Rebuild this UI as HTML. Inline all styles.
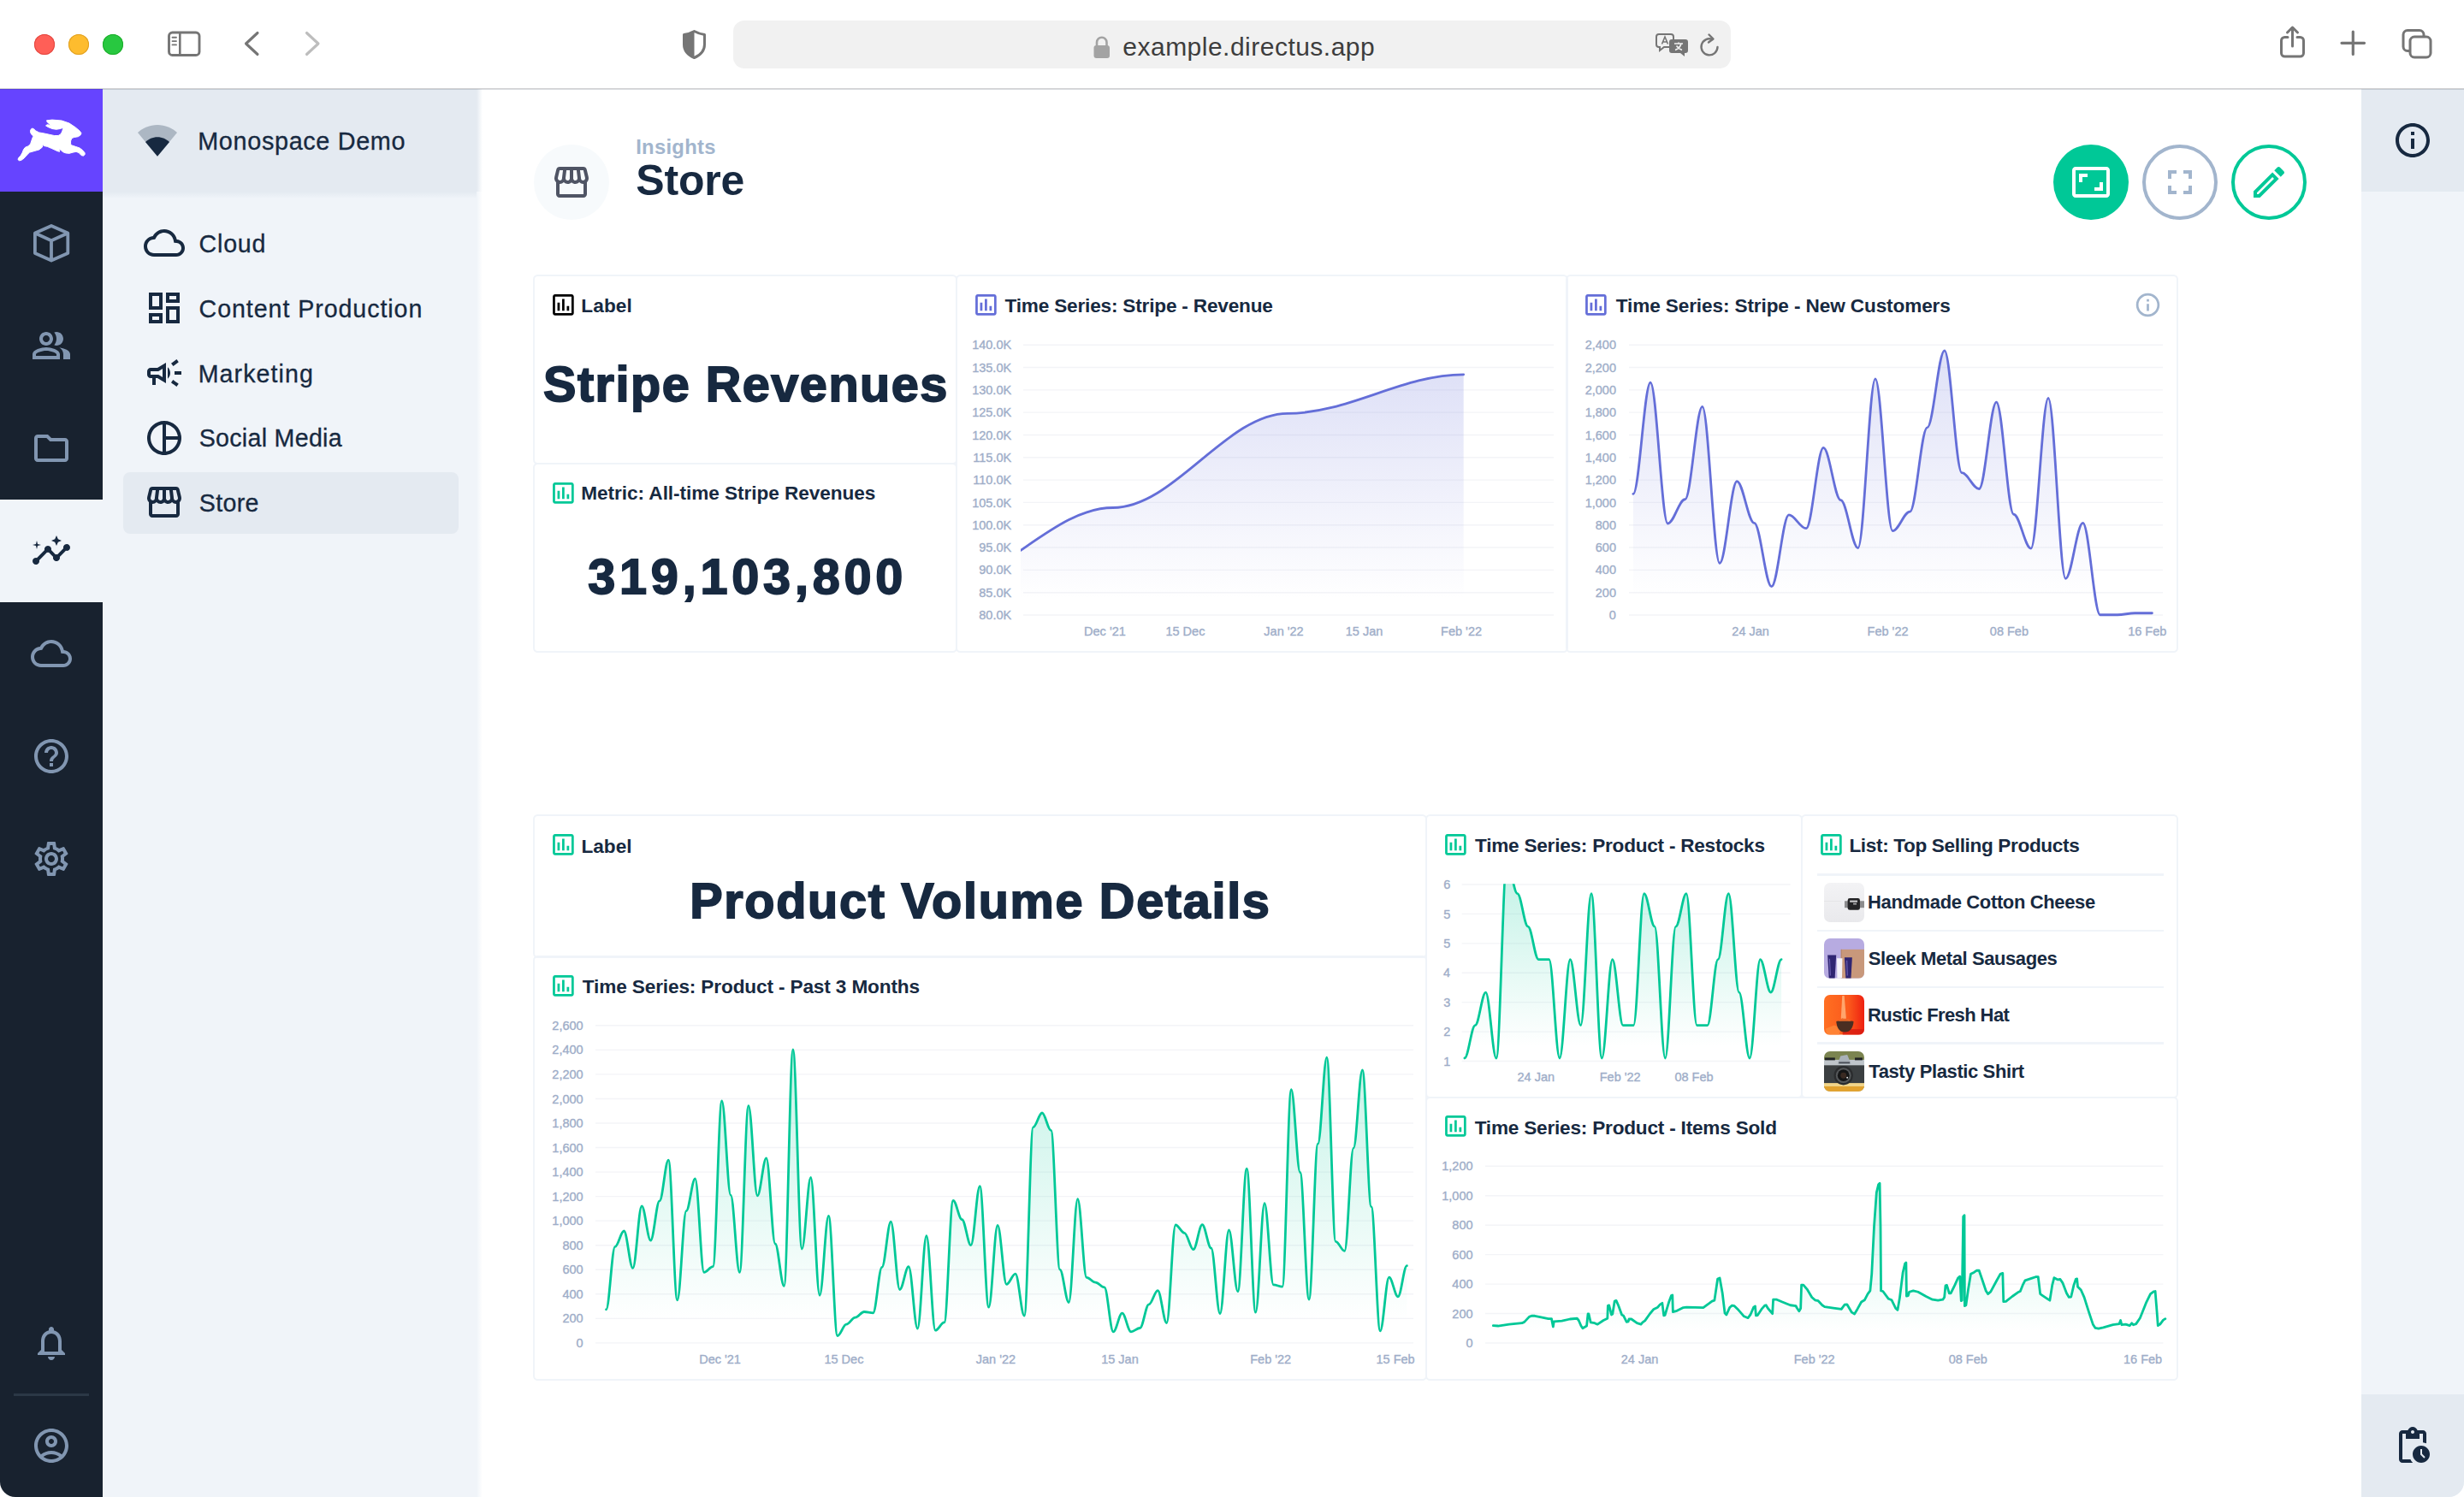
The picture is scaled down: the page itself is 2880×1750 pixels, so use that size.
<!DOCTYPE html>
<html lang="en"><head><meta charset="utf-8"><title>Store - Insights</title>
<style>
html,body{margin:0;padding:0;background:#fff;}
body{width:2880px;height:1750px;overflow:hidden;position:relative;font-family:"Liberation Sans",sans-serif;}
#w{position:absolute;left:0;top:0;width:2880px;height:1750px;overflow:hidden;border-radius:0 0 18px 18px;}
.t{position:absolute;white-space:nowrap;line-height:1;}
.i,.b{position:absolute;display:block;}
</style></head><body><div id="w">
<div class="b" style="left:0.00px;top:0.00px;width:2880.00px;height:104.00px;background:#fff;"></div>
<div class="b" style="left:40.00px;top:39.50px;width:24.00px;height:24.00px;background:#FF5F57;border-radius:50%;box-shadow:inset 0 0 0 1px #E2463F;"></div>
<div class="b" style="left:80.00px;top:39.50px;width:24.00px;height:24.00px;background:#FEBC2E;border-radius:50%;box-shadow:inset 0 0 0 1px #DFA023;"></div>
<div class="b" style="left:120.00px;top:39.50px;width:24.00px;height:24.00px;background:#28C840;border-radius:50%;box-shadow:inset 0 0 0 1px #1DAD2B;"></div>
<svg class="i" style="left:190px;top:30px" width="50" height="42" viewBox="0 0 50 42"><rect x="7.500" y="8" width="35.500" height="26.500" rx="4" fill="none" stroke="#757575" stroke-width="2.900"/><path d="M20.300 8v26.500" stroke="#757575" stroke-width="2.600" fill="none"/><path d="M11.500 13.700h4.500M11.500 18.100h4.500M11.500 22.400h4.500" stroke="#757575" stroke-width="1.900" stroke-linecap="round" fill="none"/></svg>
<svg class="i" style="left:280px;top:30px" width="30" height="42" viewBox="0 0 30 42"><path d="M21 8.500L7.500 21 21 33.500" fill="none" stroke="#757575" stroke-width="3.100" stroke-linecap="round" stroke-linejoin="round"/></svg>
<svg class="i" style="left:350px;top:30px" width="30" height="42" viewBox="0 0 30 42"><path d="M8.500 8.500L22 21 8.500 33.500" fill="none" stroke="#BDBDBD" stroke-width="3.100" stroke-linecap="round" stroke-linejoin="round"/></svg>
<svg class="i" style="left:796px;top:33px" width="32" height="38" viewBox="0 0 32 38"><path d="M15.500 3.500C11 6 7 7 3.500 7.500V19c0 7.500 5 12.500 12 15.500 7-3 12-8 12-15.500V7.500C24 7 20 6 15.500 3.500z" fill="none" stroke="#757575" stroke-width="3" stroke-linejoin="round"/><path d="M15.500 3.500C11 6 7 7 3.500 7.500V19c0 7.500 5 12.500 12 15.500z" fill="#757575"/></svg>
<div class="b" style="left:857.00px;top:24.00px;width:1166.00px;height:56.00px;background:#F1F1F1;border-radius:13px;"></div>
<svg class="i" style="left:1277px;top:40px" width="22" height="30" viewBox="0 0 22 30"><rect x="1.500" y="13" width="18.500" height="15" rx="3" fill="#A3A3A3"/><path d="M5 14V9.500a5.750 5.750 0 0 1 11.500 0V14" fill="none" stroke="#A3A3A3" stroke-width="2.600"/></svg>
<div class="t" style="left:1312.30px;top:39.80px;font-size:30.00px;color:#3D3D3D;letter-spacing:0.487px;">example.directus.app</div>
<svg class="i" style="left:1934px;top:37px" width="42" height="32" viewBox="0 0 42 32"><path d="M5 3h14a3 3 0 0 1 3 3v9a3 3 0 0 1-3 3h-8l-5 4v-4H5a3 3 0 0 1-3-3V6a3 3 0 0 1 3-3z" fill="none" stroke="#757575" stroke-width="2"/><path d="M8.500 14.500L12 6l3.500 8.500M9.800 12h4.400" fill="none" stroke="#757575" stroke-width="1.600"/><path d="M20 9h16a3 3 0 0 1 3 3v10a3 3 0 0 1-3 3h-1v4l-5-4H20a3 3 0 0 1-3-3V12a3 3 0 0 1 3-3z" fill="#757575"/><path d="M23 14h10M28 12.500v1.500M31 14c-1 4-4 6.500-7 7.500M25.500 16.500c1.500 2.500 4 4 6.500 5" fill="none" stroke="#F1F1F1" stroke-width="1.600"/></svg>
<svg class="i" style="left:1984px;top:37px" width="28" height="32" viewBox="0 0 28 32"><path d="M23.500 18a9.500 9.500 0 1 1-6-9" fill="none" stroke="#757575" stroke-width="2.400" stroke-linecap="round"/><path d="M13.500 3.500l5 5-5.500 4" fill="none" stroke="#757575" stroke-width="2.400" stroke-linecap="round" stroke-linejoin="round"/></svg>
<svg class="i" style="left:2660px;top:26px" width="40" height="48" viewBox="0 0 40 48"><path d="M14 17.500H10.500a4 4 0 0 0-4 4V36a4 4 0 0 0 4 4h18a4 4 0 0 0 4-4V21.500a4 4 0 0 0-4-4H25" fill="none" stroke="#757575" stroke-width="3" stroke-linecap="round"/><path d="M19.500 28V6.500M13.500 12l6-6 6 6" fill="none" stroke="#757575" stroke-width="3" stroke-linecap="round" stroke-linejoin="round"/></svg>
<svg class="i" style="left:2730px;top:30px" width="40" height="40" viewBox="0 0 40 40"><path d="M20.300 7v26.500M7 20.300h26.500" stroke="#757575" stroke-width="3.200" stroke-linecap="round"/></svg>
<svg class="i" style="left:2800px;top:28px" width="48" height="46" viewBox="0 0 48 46"><rect x="9" y="7.500" width="24" height="24" rx="5" fill="#fff" stroke="#757575" stroke-width="3"/><rect x="17" y="15" width="24" height="24" rx="5" fill="#fff" stroke="#757575" stroke-width="3"/></svg>
<div class="b" style="left:0.00px;top:104.00px;width:120.00px;height:1646.00px;background:#18222F;"></div>
<div class="b" style="left:0.00px;top:104.00px;width:120.00px;height:120.00px;background:#6644FF;"></div>
<svg class="i" style="left:0;top:104px" width="120" height="120" viewBox="0 0 120 120"><polygon points="54.51,36.87 60.92,36.07 72.14,37.03 80.96,40.08 88.18,44.89 92.99,48.90 94.99,51.70 94.19,53.71 91.38,55.71 86.57,56.51 83.77,57.72 82.57,60.92 82.57,64.13 83.37,65.73 88.18,67.33 92.99,68.94 96.19,71.34 99.00,74.55 99.24,76.55 97.39,78.16 94.99,77.60 92.18,74.55 88.98,73.35 84.97,74.15 80.96,75.35 76.95,74.95 73.75,73.75 71.34,71.74 68.94,69.74 69.58,73.35 66.93,72.55 60.92,69.74 55.31,67.33 51.30,66.53 50.50,64.13 49.30,68.14 45.69,70.94 40.08,72.55 34.47,74.15 31.66,76.95 28.06,80.96 24.85,83.37 22.44,83.77 21.00,82.57 21.64,80.56 24.05,78.16 26.05,74.55 27.66,70.54 29.66,68.14 32.87,66.93 35.67,64.13 37.27,59.32 38.48,56.11 39.28,54.91 37.27,53.71 35.67,50.90 35.67,48.10 37.27,46.09 39.28,46.49 41.68,48.90 45.69,50.90 52.10,52.10 57.72,53.31 63.33,54.51 68.14,54.51 70.94,52.91 72.55,50.10 73.59,46.89 73.75,45.29 70.54,46.49 65.73,47.29 60.92,46.49 56.11,44.49 53.55,42.89 55.31,41.68 59.72,42.48 57.72,40.88 55.31,38.88" fill="#fff" stroke="#fff" stroke-width="1" stroke-linejoin="round"/></svg>
<div class="b" style="left:0.00px;top:584.00px;width:120.00px;height:120.00px;background:#F0F4F9;"></div>
<svg class="i" style="left:36px;top:260px" width="48" height="48" viewBox="0 0 48 48"><path d="M24 4L43.300 12.500V36L24 44.500 4.900 36V12.500zM4.900 12.500L24 21.200 43.300 12.500M24 21.200V44.500" fill="none" stroke="#8196B1" stroke-width="3.800" stroke-linejoin="round"/></svg>
<svg class="i" style="left:36.00px;top:380.00px;" width="48.00" height="48.00" viewBox="0 0 24 24"><path fill="#8196B1" d="M16.67 13.13C18.04 14.06 19 15.32 19 17v3h4v-3c0-2.18-3.57-3.47-6.33-3.87zM15 12c2.21 0 4-1.79 4-4s-1.79-4-4-4c-.47 0-.91.1-1.33.24C14.5 5.27 15 6.58 15 8s-.5 2.73-1.33 3.76c.42.14.86.24 1.33.24zM9 12c2.21 0 4-1.79 4-4s-1.79-4-4-4-4 1.79-4 4 1.79 4 4 4zm0-6c1.1 0 2 .9 2 2s-.9 2-2 2-2-.9-2-2 .9-2 2-2zm0 7c-2.67 0-8 1.34-8 4v3h16v-3c0-2.66-5.33-4-8-4zm6 5H3v-.99C3.2 16.29 6.3 15 9 15s5.8 1.29 6 2v1z"/></svg>
<svg class="i" style="left:36.00px;top:500.00px;" width="48.00" height="48.00" viewBox="0 0 24 24"><path fill="#8196B1" d="M9.17 6l2 2H20v10H4V6h5.17M10 4H4c-1.1 0-1.99.9-1.99 2L2 18c0 1.1.9 2 2 2h16c1.1 0 2-.9 2-2V8c0-1.1-.9-2-2-2h-8l-2-2z"/></svg>
<svg class="i" style="left:36.00px;top:620.00px;" width="48.00" height="48.00" viewBox="0 0 24 24"><path fill="#172940" d="M21 8c-1.45 0-2.26 1.44-1.93 2.51l-3.55 3.56c-.3-.09-.74-.09-1.04 0l-2.55-2.55C12.27 10.45 11.46 9 10 9c-1.45 0-2.27 1.44-1.930 2.520l-4.560 4.550C2.440 15.740 1 16.550 1 18c0 1.100.9 2 2 2 1.450 0 2.260-1.440 1.930-2.510l4.550-4.560c.3.09.74.09 1.040 0l2.550 2.550C12.730 16.550 13.540 18 15 18c1.450 0 2.270-1.440 1.930-2.520l3.560-3.550c1.070.33 2.510-.48 2.510-1.930 0-1.100-.9-2-2-2zM15 9l.94-2.070L18 6l-2.060-.93L15 3l-.92 2.070L12 6l2.080.93zM3.500 11L4 9l2-.5L4 8l-.5-2L3 8l-2 .5L3 9z"/></svg>
<svg class="i" style="left:36.00px;top:740.00px;" width="48.00" height="48.00" viewBox="0 0 24 24"><path fill="#8196B1" d="M19.35 10.04C18.67 6.59 15.64 4 12 4 9.11 4 6.6 5.64 5.35 8.04 2.34 8.36 0 10.91 0 14c0 3.31 2.69 6 6 6h13c2.76 0 5-2.24 5-5 0-2.64-2.05-4.78-4.65-4.96zM19 18H6c-2.21 0-4-1.79-4-4 0-2.05 1.53-3.76 3.56-3.97l1.07-.11.5-.95C8.08 7.14 9.94 6 12 6c2.62 0 4.88 1.86 5.39 4.43l.3 1.5 1.53.11c1.56.1 2.78 1.41 2.78 2.96 0 1.65-1.35 3-3 3z"/></svg>
<svg class="i" style="left:36.00px;top:860.00px;" width="48.00" height="48.00" viewBox="0 0 24 24"><path fill="#8196B1" d="M11 18h2v-2h-2v2zm1-16C6.48 2 2 6.48 2 12s4.48 10 10 10 10-4.48 10-10S17.52 2 12 2zm0 18c-4.41 0-8-3.59-8-8s3.59-8 8-8 8 3.59 8 8-3.59 8-8 8zm0-14c-2.21 0-4 1.79-4 4h2c0-1.1.9-2 2-2s2 .9 2 2c0 2-3 1.75-3 5h2c0-2.25 3-2.5 3-5 0-2.21-1.790-4-4-4z"/></svg>
<svg class="i" style="left:36.00px;top:980.00px;" width="48.00" height="48.00" viewBox="0 0 24 24"><path fill="#8196B1" d="M19.43 12.98c.04-.32.07-.64.07-.98 0-.34-.03-.66-.07-.98l2.110-1.650c.19-.15.24-.42.12-.64l-2-3.460c-.09-.16-.26-.25-.44-.25-.06 0-.12.01-.17.03l-2.490 1c-.52-.4-1.080-.73-1.690-.98l-.38-2.650C14.460 2.180 14.250 2 14 2h-4c-.25 0-.46.18-.49.42l-.38 2.650c-.61.25-1.170.59-1.690.98l-2.490-1c-.06-.02-.12-.03-.18-.03-.17 0-.34.09-.43.25l-2 3.460c-.13.22-.07.49.12.64l2.110 1.650c-.04.32-.07.65-.07.98 0 .33.03.66.07.98l-2.110 1.650c-.19.15-.24.42-.12.64l2 3.460c.09.16.26.25.44.25.06 0 .12-.01.17-.03l2.490-1c.52.4 1.080.73 1.690.98l.38 2.650c.03.24.24.42.49.42h4c.25 0 .46-.18.49-.42l.38-2.650c.61-.25 1.170-.59 1.690-.98l2.490 1c.06.02.12.03.18.03.17 0 .34-.09.43-.25l2-3.460c.12-.22.07-.49-.12-.64l-2.110-1.650zm-1.980-1.710c.04.31.05.52.05.73 0 .21-.02.43-.05.73l-.14 1.130.89.7 1.080.84-.7 1.210-1.270-.51-1.040-.42-.9.68c-.43.32-.84.56-1.250.73l-1.060.43-.16 1.130-.2 1.350h-1.400l-.19-1.350-.16-1.130-1.060-.43c-.43-.18-.83-.41-1.230-.71l-.91-.7-1.060.43-1.270.51-.7-1.210 1.080-.84.89-.7-.14-1.130c-.03-.31-.05-.54-.05-.74s.02-.43.05-.73l.14-1.130-.89-.7-1.080-.84.7-1.210 1.270.51 1.040.42.9-.68c.43-.32.84-.56 1.250-.73l1.060-.43.16-1.130.2-1.350h1.390l.19 1.350.16 1.130 1.060.43c.43.18.83.41 1.230.71l.91.7 1.060-.43 1.270-.51.7 1.210-1.070.85-.89.7.14 1.130zM12 8c-2.210 0-4 1.790-4 4s1.790 4 4 4 4-1.790 4-4-1.790-4-4-4zm0 6c-1.100 0-2-.9-2-2s.9-2 2-2 2 .9 2 2-.9 2-2 2z"/></svg>
<svg class="i" style="left:36.00px;top:1546.00px;" width="48.00" height="48.00" viewBox="0 0 24 24"><path fill="#8196B1" d="M12 22c1.1 0 2-.9 2-2h-4c0 1.1.9 2 2 2zm6-6v-5c0-3.070-1.630-5.640-4.500-6.320V4c0-.83-.67-1.500-1.500-1.500s-1.500.67-1.500 1.500v.68C7.640 5.360 6 7.920 6 11v5l-2 2v1h16v-1l-2-2zm-2 1H8v-6c0-2.480 1.510-4.500 4-4.500s4 2.020 4 4.500v6z"/></svg>
<div class="b" style="left:16.00px;top:1629.00px;width:88.00px;height:2.50px;background:#2B3846;"></div>
<svg class="i" style="left:36.00px;top:1666.00px;" width="48.00" height="48.00" viewBox="0 0 24 24"><path fill="#8196B1" d="M12 2C6.48 2 2 6.48 2 12s4.48 10 10 10 10-4.48 10-10S17.52 2 12 2zM7.350 18.500C8.660 17.560 10.260 17 12 17s3.340.56 4.650 1.500c-1.310.94-2.910 1.500-4.650 1.500s-3.340-.56-4.650-1.500zm10.790-1.380C16.450 15.800 14.320 15 12 15s-4.450.8-6.140 2.120C4.700 15.730 4 13.950 4 12c0-4.420 3.580-8 8-8s8 3.580 8 8c0 1.950-.7 3.730-1.860 5.120zM12 6c-1.930 0-3.500 1.570-3.500 3.500S10.070 13 12 13s3.500-1.570 3.500-3.500S13.930 6 12 6zm0 5c-.83 0-1.500-.67-1.500-1.500S11.170 8 12 8s1.500.67 1.500 1.500S12.830 11 12 11z"/></svg>
<div class="b" style="left:120.00px;top:104.00px;width:440.00px;height:1646.00px;background:#F0F4F9;"></div>
<div class="b" style="left:120.00px;top:224.00px;width:440.00px;height:8.00px;background:linear-gradient(#E4EAF1,#F0F4F9);"></div>
<div class="b" style="left:120.00px;top:104.00px;width:440.00px;height:120.00px;background:#E4EAF1;"></div>
<svg class="i" style="left:156px;top:140px" width="56" height="48" viewBox="0 0 56 48"><path d="M28 42.800L5 15C11 9.500 19 6 28 6s17 3.500 23 9z" fill="#ACB7C3"/><path d="M28 42.800L14 26c3.500-3.500 8.500-5.800 14-5.800S38.500 22.500 42 26z" fill="#172940"/></svg>
<div class="t" style="left:231.20px;top:150.90px;font-size:28.80px;color:#172940;letter-spacing:0.665px;-webkit-text-stroke:.300px #172940;">Monospace Demo</div>
<div class="b" style="left:144.00px;top:552.00px;width:392.00px;height:72.00px;background:#E4EAF1;border-radius:8px;"></div>
<svg class="i" style="left:168.00px;top:259.80px;" width="48.00" height="48.00" viewBox="0 0 24 24"><path fill="#172940" d="M19.35 10.04C18.67 6.59 15.64 4 12 4 9.11 4 6.6 5.64 5.35 8.04 2.34 8.36 0 10.91 0 14c0 3.31 2.69 6 6 6h13c2.76 0 5-2.24 5-5 0-2.64-2.05-4.78-4.65-4.96zM19 18H6c-2.21 0-4-1.79-4-4 0-2.05 1.53-3.76 3.56-3.97l1.07-.11.5-.95C8.08 7.14 9.94 6 12 6c2.62 0 4.88 1.86 5.39 4.43l.3 1.5 1.53.11c1.56.1 2.78 1.41 2.78 2.96 0 1.65-1.35 3-3 3z"/></svg>
<div class="t" style="left:232.57px;top:271.00px;font-size:28.60px;color:#172940;letter-spacing:0.786px;-webkit-text-stroke:.300px #172940;">Cloud</div>
<svg class="i" style="left:168.00px;top:336.20px;" width="48.00" height="48.00" viewBox="0 0 24 24"><path fill="#172940" d="M19 5v2h-4V5h4M9 5v6H5V5h4m10 8v6h-4v-6h4M9 17v2H5v-2h4M21 3h-8v6h8V3zM11 3H3v10h8V3zm10 8h-8v10h8V11zm-10 4H3v6h8v-6z"/></svg>
<div class="t" style="left:232.57px;top:347.00px;font-size:28.60px;color:#172940;letter-spacing:0.940px;-webkit-text-stroke:.300px #172940;">Content Production</div>
<svg class="i" style="left:168.00px;top:412.20px;" width="48.00" height="48.00" viewBox="0 0 24 24"><path fill="#172940" d="M18 11v2h4v-2h-4zm-2 6.61c.96.71 2.21 1.65 3.2 2.39.4-.53.8-1.07 1.2-1.6-.99-.74-2.24-1.68-3.2-2.4-.4.54-.8 1.08-1.2 1.61zM20.4 5.6c-.4-.53-.8-1.07-1.2-1.6-.99.74-2.24 1.68-3.2 2.4.4.53.8 1.07 1.2 1.6.96-.72 2.21-1.65 3.2-2.4zM4 9c-1.1 0-2 .9-2 2v2c0 1.1.9 2 2 2h1v4h2v-4h1l5 3V6L8 9H4zm5.03 1.71L11 9.53v4.94l-1.97-1.18-.48-.29H4v-2h4.55l.48-.29zM15.5 12c0-1.33-.58-2.53-1.5-3.35v6.69c.92-.81 1.5-2.01 1.5-3.34z"/></svg>
<div class="t" style="left:231.71px;top:423.00px;font-size:28.60px;color:#172940;letter-spacing:1.074px;-webkit-text-stroke:.300px #172940;">Marketing</div>
<svg class="i" style="left:168.00px;top:487.70px;" width="48.00" height="48.00" viewBox="0 0 24 24"><path fill="#172940" d="M12 2C6.48 2 2 6.48 2 12s4.48 10 10 10 10-4.48 10-10S17.52 2 12 2zm1 2.07c3.61.45 6.48 3.33 6.93 6.93H13V4.07zM4 12c0-4.06 3.07-7.44 7-7.93v15.87c-3.93-.5-7-3.88-7-7.94zm9 7.93V13h6.93c-.45 3.61-3.32 6.48-6.93 6.93z"/></svg>
<div class="t" style="left:232.71px;top:498.00px;font-size:28.60px;color:#172940;letter-spacing:0.296px;-webkit-text-stroke:.300px #172940;">Social Media</div>
<svg class="i" style="left:168.00px;top:563.20px;" width="48.00" height="48.00" viewBox="0 0 24 24"><path fill="#172940" d="M21.9 8.89l-1.05-4.37c-.22-.9-1-1.52-1.91-1.52H5.05c-.9 0-1.69.63-1.9 1.52L2.1 8.89c-.24 1.02-.02 2.06.62 2.88.08.11.19.19.28.29V19c0 1.1.9 2 2 2h14c1.1 0 2-.9 2-2v-6.940c.09-.09.2-.18.28-.28.64-.82.87-1.87.62-2.890zm-2.990-3.9l1.05 4.37c.1.42.01.84-.25 1.17-.14.18-.44.47-.94.47-.61 0-1.14-.49-1.21-1.14L16.980 5l1.930-.010zM13 5h1.960l.54 4.520c.05.39-.07.78-.33 1.070-.22.26-.54.41-.95.41-.67 0-1.220-.59-1.220-1.310V5zM8.490 9.520L9.040 5H11v4.690c0 .72-.55 1.310-1.290 1.310-.34 0-.65-.15-.89-.41-.25-.29-.37-.68-.33-1.070zm-4.450-.16L5.050 5h1.970l-.58 4.860c-.08.65-.6 1.140-1.210 1.140-.49 0-.8-.29-.93-.47-.27-.32-.36-.75-.26-1.170zM5 19v-6.030c.08.01.15.03.23.03.87 0 1.660-.36 2.240-.95.6.6 1.400.95 2.310.95.87 0 1.650-.36 2.230-.93.59.57 1.390.93 2.290.93.84 0 1.640-.35 2.240-.95.58.59 1.370.95 2.240.95.08 0 .15-.02.23-.03V19H5z"/></svg>
<div class="t" style="left:232.71px;top:574.00px;font-size:28.60px;color:#172940;letter-spacing:0.355px;-webkit-text-stroke:.300px #172940;">Store</div>
<div class="b" style="left:560.00px;top:104.00px;width:2200.00px;height:1646.00px;background:#fff;"></div>
<div class="b" style="left:556.50px;top:104.00px;width:7.00px;height:1646.00px;background:linear-gradient(90deg,#F0F4F9,#fff);"></div>
<div class="b" style="left:556.50px;top:104.00px;width:7.00px;height:120.00px;background:linear-gradient(90deg,#E4EAF1,#fff);"></div>
<div class="b" style="left:2760.00px;top:104.00px;width:120.00px;height:1646.00px;background:#F0F4F9;"></div>
<div class="b" style="left:2760.00px;top:104.00px;width:120.00px;height:120.00px;background:#E4EAF1;"></div>
<div class="b" style="left:2760.00px;top:1630.00px;width:120.00px;height:120.00px;background:#E4EAF1;"></div>
<svg class="i" style="left:2796.00px;top:140.00px;" width="48.00" height="48.00" viewBox="0 0 24 24"><path fill="#172940" d="M11 7h2v2h-2zm0 4h2v6h-2zm1-9C6.48 2 2 6.48 2 12s4.48 10 10 10 10-4.48 10-10S17.52 2 12 2zm0 18c-4.410 0-8-3.590-8-8s3.590-8 8-8 8 3.590 8 8-3.590 8-8 8z"/></svg>
<svg class="i" style="left:2796.00px;top:1666.00px;" width="48.00" height="48.00" viewBox="0 0 24 24"><path fill="#172940" d="M17 12c-2.760 0-5 2.240-5 5s2.240 5 5 5 5-2.240 5-5-2.240-5-5-5zm1.650 7.350L16.500 17.200V14h1v2.790l1.850 1.850-.7.710zM18 3h-3.180C14.400 1.840 13.300 1 12 1s-2.400.84-2.820 2H6c-1.100 0-2 .9-2 2v15c0 1.100.9 2 2 2h6.110c-.59-.57-1.070-1.250-1.420-2H6V5h2v3h8V5h2v5.080c.71.1 1.380.31 2 .6V5c0-1.100-.9-2-2-2zm-6 2c-.55 0-1-.45-1-1s.45-1 1-1 1 .45 1 1-.45 1-1 1z"/></svg>
<div class="b" style="left:0.00px;top:103.00px;width:2880.00px;height:1.20px;background:#D2D2D4;"></div>
<div class="b" style="left:0.00px;top:104.00px;width:2880.00px;height:1.40px;background:rgba(20,30,50,.16);"></div>
<div class="b" style="left:624.00px;top:169.00px;width:88.00px;height:88.00px;background:#F7FAFC;border-radius:50%;"></div>
<svg class="i" style="left:644.00px;top:189.00px;" width="48.00" height="48.00" viewBox="0 0 24 24"><path fill="#4F5464" d="M21.9 8.89l-1.05-4.37c-.22-.9-1-1.52-1.91-1.52H5.05c-.9 0-1.69.63-1.9 1.52L2.1 8.89c-.24 1.02-.02 2.06.62 2.88.08.11.19.19.28.29V19c0 1.1.9 2 2 2h14c1.1 0 2-.9 2-2v-6.940c.09-.09.2-.18.28-.28.64-.82.87-1.87.62-2.890zm-2.990-3.9l1.05 4.37c.1.42.01.84-.25 1.17-.14.18-.44.47-.94.47-.61 0-1.14-.49-1.21-1.14L16.980 5l1.930-.010zM13 5h1.960l.54 4.520c.05.39-.07.78-.33 1.070-.22.26-.54.41-.95.41-.67 0-1.220-.59-1.220-1.310V5zM8.490 9.520L9.040 5H11v4.690c0 .72-.55 1.310-1.290 1.310-.34 0-.65-.15-.89-.41-.25-.29-.37-.68-.33-1.070zm-4.450-.16L5.050 5h1.970l-.58 4.860c-.08.65-.6 1.140-1.210 1.140-.49 0-.8-.29-.93-.47-.27-.32-.36-.75-.26-1.170zM5 19v-6.030c.08.01.15.03.23.03.87 0 1.660-.36 2.240-.95.6.6 1.400.95 2.310.95.87 0 1.650-.36 2.230-.93.59.57 1.390.93 2.290.93.84 0 1.640-.35 2.240-.95.58.59 1.370.95 2.240.95.08 0 .15-.02.23-.03V19H5z"/></svg>
<div class="t" style="left:743.15px;top:159.90px;font-size:23.80px;color:#A2B5CD;font-weight:700;letter-spacing:0.306px;">Insights</div>
<div class="t" style="left:743.20px;top:186.30px;font-size:50.00px;color:#172940;font-weight:700;letter-spacing:-0.150px;">Store</div>
<div class="b" style="left:2400.00px;top:169.00px;width:88.00px;height:88.00px;background:#00C897;border-radius:50%;"></div>
<svg class="i" style="left:2420.00px;top:189.00px;" width="48.00" height="48.00" viewBox="0 0 24 24"><path fill="#fff" d="M19 12h-2v3h-3v2h5v-5zM7 9h3V7H5v5h2V9zm14-6H3c-1.100 0-2 .9-2 2v14c0 1.100.9 2 2 2h18c1.100 0 2-.9 2-2V5c0-1.100-.9-2-2-2zm0 16.010H3V4.990h18v14.020z"/></svg>
<div class="b" style="left:2504.00px;top:169.00px;width:88.00px;height:88.00px;border:4px solid #A2B5CD;border-radius:50%;box-sizing:border-box;"></div>
<svg class="i" style="left:2524.00px;top:189.00px;" width="48.00" height="48.00" viewBox="0 0 24 24"><path fill="#A2B5CD" d="M7 14H5v5h5v-2H7v-3zm-2-4h2V7h3V5H5v5zm12 7h-3v2h5v-5h-2v3zM14 5v2h3v3h2V5h-5z"/></svg>
<div class="b" style="left:2608.00px;top:169.00px;width:88.00px;height:88.00px;border:4px solid #00C897;border-radius:50%;box-sizing:border-box;"></div>
<svg class="i" style="left:2628.00px;top:189.00px;" width="48.00" height="48.00" viewBox="0 0 24 24"><path fill="#00C897" d="M3 17.250V21h3.750L17.810 9.940l-3.750-3.750L3 17.250zM5.920 19H5v-.92l9.060-9.060.92.92L5.920 19zM20.710 5.630l-2.340-2.340c-.2-.2-.45-.29-.71-.29s-.51.1-.7.29l-1.830 1.830 3.750 3.750 1.830-1.830c.39-.39.39-1.020 0-1.410z"/></svg>
<div class="b" style="left:622.80px;top:321.10px;width:496.66px;height:222.26px;border:2.74px solid #F0F4F9;border-radius:5.500px;box-sizing:border-box;"></div>
<svg class="i" style="left:642.07px;top:340.07px;" width="32.80" height="32.80" viewBox="0 0 24 24"><path fill="#000" d="M9 17H7v-7h2v7zm4 0h-2V7h2v10zm4 0h-2v-4h2v4zm2 2H5V5h14v14zm0-16H5c-1.100 0-2 .9-2 2v14c0 1.100.9 2 2 2h14c1.100 0 2-.9 2-2V5c0-1.100-.9-2-2-2z"/></svg>
<div class="t" style="left:679.33px;top:346.50px;font-size:22.60px;color:#172940;font-weight:700;letter-spacing:0.113px;">Label</div>
<div class="b" style="left:622.80px;top:540.62px;width:496.66px;height:222.26px;border:2.74px solid #F0F4F9;border-radius:5.500px;box-sizing:border-box;"></div>
<svg class="i" style="left:642.07px;top:559.59px;" width="32.80" height="32.80" viewBox="0 0 24 24"><path fill="#00C897" d="M9 17H7v-7h2v7zm4 0h-2V7h2v10zm4 0h-2v-4h2v4zm2 2H5V5h14v14zm0-16H5c-1.100 0-2 .9-2 2v14c0 1.100.9 2 2 2h14c1.100 0 2-.9 2-2V5c0-1.100-.9-2-2-2z"/></svg>
<div class="t" style="left:679.33px;top:565.50px;font-size:22.60px;color:#172940;font-weight:700;letter-spacing:-0.058px;">Metric: All-time Stripe Revenues</div>
<div class="b" style="left:1116.72px;top:321.10px;width:716.18px;height:441.78px;border:2.74px solid #F0F4F9;border-radius:5.500px;box-sizing:border-box;"></div>
<svg class="i" style="left:1135.99px;top:340.07px;" width="32.80" height="32.80" viewBox="0 0 24 24"><path fill="#646ED8" d="M9 17H7v-7h2v7zm4 0h-2V7h2v10zm4 0h-2v-4h2v4zm2 2H5V5h14v14zm0-16H5c-1.100 0-2 .9-2 2v14c0 1.100.9 2 2 2h14c1.100 0 2-.9 2-2V5c0-1.100-.9-2-2-2z"/></svg>
<div class="t" style="left:1174.47px;top:346.50px;font-size:22.60px;color:#172940;font-weight:700;letter-spacing:-0.183px;">Time Series: Stripe - Revenue</div>
<div class="b" style="left:1830.16px;top:321.10px;width:716.18px;height:441.78px;border:2.74px solid #F0F4F9;border-radius:5.500px;box-sizing:border-box;"></div>
<svg class="i" style="left:1849.43px;top:340.07px;" width="32.80" height="32.80" viewBox="0 0 24 24"><path fill="#646ED8" d="M9 17H7v-7h2v7zm4 0h-2V7h2v10zm4 0h-2v-4h2v4zm2 2H5V5h14v14zm0-16H5c-1.100 0-2 .9-2 2v14c0 1.100.9 2 2 2h14c1.100 0 2-.9 2-2V5c0-1.100-.9-2-2-2z"/></svg>
<div class="t" style="left:1888.77px;top:346.50px;font-size:22.60px;color:#172940;font-weight:700;letter-spacing:-0.119px;">Time Series: Stripe - New Customers</div>
<svg class="i" style="left:2493.50px;top:340.00px;" width="33.00" height="33.00" viewBox="0 0 24 24"><path fill="#A2B5CD" d="M11 7h2v2h-2zm0 4h2v6h-2zm1-9C6.48 2 2 6.48 2 12s4.48 10 10 10 10-4.48 10-10S17.52 2 12 2zm0 18c-4.410 0-8-3.590-8-8s3.590-8 8-8 8 3.590 8 8-3.590 8-8 8z"/></svg>
<div class="b" style="left:622.80px;top:952.22px;width:1045.46px;height:167.38px;border:2.74px solid #F0F4F9;border-radius:5.500px;box-sizing:border-box;"></div>
<svg class="i" style="left:642.07px;top:971.19px;" width="32.80" height="32.80" viewBox="0 0 24 24"><path fill="#00C897" d="M9 17H7v-7h2v7zm4 0h-2V7h2v10zm4 0h-2v-4h2v4zm2 2H5V5h14v14zm0-16H5c-1.100 0-2 .9-2 2v14c0 1.100.9 2 2 2h14c1.100 0 2-.9 2-2V5c0-1.100-.9-2-2-2z"/></svg>
<div class="t" style="left:679.43px;top:978.50px;font-size:22.60px;color:#172940;font-weight:700;letter-spacing:0.013px;">Label</div>
<div class="b" style="left:622.80px;top:1116.86px;width:1045.46px;height:496.66px;border:2.74px solid #F0F4F9;border-radius:5.500px;box-sizing:border-box;"></div>
<svg class="i" style="left:642.07px;top:1135.83px;" width="32.80" height="32.80" viewBox="0 0 24 24"><path fill="#00C897" d="M9 17H7v-7h2v7zm4 0h-2V7h2v10zm4 0h-2v-4h2v4zm2 2H5V5h14v14zm0-16H5c-1.100 0-2 .9-2 2v14c0 1.100.9 2 2 2h14c1.100 0 2-.9 2-2V5c0-1.100-.9-2-2-2z"/></svg>
<div class="t" style="left:680.87px;top:1142.50px;font-size:22.60px;color:#172940;font-weight:700;letter-spacing:-0.133px;">Time Series: Product - Past 3 Months</div>
<div class="b" style="left:1665.52px;top:952.22px;width:441.78px;height:332.02px;border:2.74px solid #F0F4F9;border-radius:5.500px;box-sizing:border-box;"></div>
<svg class="i" style="left:1684.79px;top:971.19px;" width="32.80" height="32.80" viewBox="0 0 24 24"><path fill="#00C897" d="M9 17H7v-7h2v7zm4 0h-2V7h2v10zm4 0h-2v-4h2v4zm2 2H5V5h14v14zm0-16H5c-1.100 0-2 .9-2 2v14c0 1.100.9 2 2 2h14c1.100 0 2-.9 2-2V5c0-1.100-.9-2-2-2z"/></svg>
<div class="t" style="left:1724.07px;top:977.50px;font-size:22.60px;color:#172940;font-weight:700;letter-spacing:-0.240px;">Time Series: Product - Restocks</div>
<div class="b" style="left:2104.56px;top:952.22px;width:441.78px;height:332.02px;border:2.74px solid #F0F4F9;border-radius:5.500px;box-sizing:border-box;"></div>
<svg class="i" style="left:2123.83px;top:971.19px;" width="32.80" height="32.80" viewBox="0 0 24 24"><path fill="#00C897" d="M9 17H7v-7h2v7zm4 0h-2V7h2v10zm4 0h-2v-4h2v4zm2 2H5V5h14v14zm0-16H5c-1.100 0-2 .9-2 2v14c0 1.100.9 2 2 2h14c1.100 0 2-.9 2-2V5c0-1.100-.9-2-2-2z"/></svg>
<div class="t" style="left:2161.43px;top:977.50px;font-size:22.60px;color:#172940;font-weight:700;letter-spacing:-0.358px;">List: Top Selling Products</div>
<div class="b" style="left:1665.52px;top:1281.50px;width:880.82px;height:332.02px;border:2.74px solid #F0F4F9;border-radius:5.500px;box-sizing:border-box;"></div>
<svg class="i" style="left:1684.79px;top:1300.47px;" width="32.80" height="32.80" viewBox="0 0 24 24"><path fill="#00C897" d="M9 17H7v-7h2v7zm4 0h-2V7h2v10zm4 0h-2v-4h2v4zm2 2H5V5h14v14zm0-16H5c-1.100 0-2 .9-2 2v14c0 1.100.9 2 2 2h14c1.100 0 2-.9 2-2V5c0-1.100-.9-2-2-2z"/></svg>
<div class="t" style="left:1723.67px;top:1307.50px;font-size:22.60px;color:#172940;font-weight:700;letter-spacing:-0.207px;">Time Series: Product - Items Sold</div>
<div class="t" style="left:634.97px;top:420.50px;font-size:57.60px;color:#172940;font-weight:700;letter-spacing:1.503px;-webkit-text-stroke:1.800px #172940;">Stripe Revenues</div>
<div class="t" style="left:687.26px;top:645.50px;font-size:57.60px;color:#172940;font-weight:700;letter-spacing:4.779px;-webkit-text-stroke:1.800px #172940;">319,103,800</div>
<div class="t" style="left:806.16px;top:1024.50px;font-size:57.60px;color:#172940;font-weight:700;letter-spacing:1.691px;-webkit-text-stroke:1.800px #172940;">Product Volume Details</div>
<div class="b" style="left:2123.70px;top:1021.30px;width:405.30px;height:2.40px;background:#F0F4F9;"></div>
<div class="t" style="left:2183.07px;top:1043.80px;font-size:22.00px;color:#172940;font-weight:700;letter-spacing:-0.366px;">Handmade Cotton Cheese</div>
<div class="b" style="left:2123.70px;top:1087.03px;width:405.30px;height:2.40px;background:#F0F4F9;"></div>
<div class="t" style="left:2183.84px;top:1109.80px;font-size:22.00px;color:#172940;font-weight:700;letter-spacing:-0.408px;">Sleek Metal Sausages</div>
<div class="b" style="left:2123.70px;top:1152.76px;width:405.30px;height:2.40px;background:#F0F4F9;"></div>
<div class="t" style="left:2183.07px;top:1175.80px;font-size:22.00px;color:#172940;font-weight:700;letter-spacing:-0.603px;">Rustic Fresh Hat</div>
<div class="b" style="left:2123.70px;top:1218.49px;width:405.30px;height:2.40px;background:#F0F4F9;"></div>
<div class="t" style="left:2184.28px;top:1241.80px;font-size:22.00px;color:#172940;font-weight:700;letter-spacing:-0.403px;">Tasty Plastic Shirt</div>
<svg class="i" style="left:2131.700px;top:1031.70px;border-radius:7px" width="47.400" height="46.500" viewBox="0 0 48 47" preserveAspectRatio="none"><defs><linearGradient id="t1" x1="0" y1="0" x2="0" y2="1"><stop offset="0" stop-color="#F3F3F5"/><stop offset="1" stop-color="#E9E9EC"/></linearGradient></defs><rect width="48" height="47" fill="url(#t1)"/><rect x="0" y="21.500" width="20" height=".8" fill="#E2E2E4"/><rect x="24.300" y="21.500" width="23.700" height="8" fill="#8C8C8E"/><rect x="28" y="18.200" width="14.500" height="14" rx="2.500" fill="#242426"/><rect x="30.500" y="20.800" width="9" height="2.200" fill="#C9C9CB"/><rect x="34.500" y="24" width="4" height="1.800" fill="#A9A9AB"/></svg>
<svg class="i" style="left:2131.700px;top:1097.47px;border-radius:7px" width="47.400" height="46.500" viewBox="0 0 48 47" preserveAspectRatio="none"><rect width="48" height="47" fill="#B7ABE1"/><rect x="20" y="13" width="28" height="34" fill="#C8987B"/><rect x="20" y="13" width="1.200" height="34" fill="#B98A6E"/><path d="M4.200 19.600h10.200l-1.600 27.400h-7z" fill="#2F2572"/><path d="M15.200 23.400h6.500l-.4 23.600h-5.700z" fill="#F5F3FA"/><path d="M24.300 22.400h9l-1.400 24.600h-6.200z" fill="#2F2572"/><path d="M6.500 24l1 20M27 26l.6 18" stroke="#6A5FB0" stroke-width="1.200"/></svg>
<svg class="i" style="left:2131.700px;top:1163.24px;border-radius:7px" width="47.400" height="46.500" viewBox="0 0 48 47" preserveAspectRatio="none"><defs><linearGradient id="t3" x1="0" y1="0" x2="1" y2="0"><stop offset="0" stop-color="#FF6F22"/><stop offset=".6" stop-color="#FB5A1C"/><stop offset="1" stop-color="#EE1F10"/></linearGradient></defs><rect width="48" height="47" fill="url(#t3)"/><rect x="22" y="40.500" width="26" height="6.500" fill="#D91C10" opacity=".85"/><path d="M21.500 1l2.500 0 2.200 27-6.200 0z" fill="#FFB27A" opacity=".85"/><path d="M2 40l10-4 8 3-2 8H3z" fill="#FF8A3A" opacity=".8"/><path d="M14.500 31.500c2-1.500 18-1.500 20.500 0c-.5 7-4 12.500-10.500 12.500S15 38.500 14.500 31.500z" fill="#4A2E22"/><path d="M17 31c2-3 4-1 5-4 1 3 3 0 4 3 2-3 4-1 6 1z" fill="#E96A2A"/></svg>
<svg class="i" style="left:2131.700px;top:1229.01px;border-radius:7px" width="47.400" height="46.500" viewBox="0 0 48 47" preserveAspectRatio="none"><rect width="48" height="47" fill="#7B8450"/><rect x="0" y="37.400" width="48" height="10" fill="#E2A22E"/><rect x="0" y="37.400" width="48" height="4" fill="#F1D58A"/><rect x="0" y="15.500" width="48" height="22" fill="#3B3F41"/><rect x="0" y="10" width="48" height="6.500" fill="#BFC5CA"/><rect x="1" y="7.500" width="12" height="3" fill="#1F2224"/><rect x="36.500" y="7.500" width="9" height="3" fill="#1F2224"/><path d="M16 15l3.500-9.500 8-1.500 4.500 11z" fill="#A9B1B8"/><rect x="17.500" y="12.500" width="13" height="2" fill="#4A5058"/><circle cx="23" cy="28.500" r="11.300" fill="#2A2C2E"/><circle cx="23" cy="28.500" r="9" fill="#55585A"/><circle cx="23" cy="28.500" r="7" fill="#151617"/><circle cx="23" cy="28.500" r="3.500" fill="#3A2A22"/><circle cx="27.500" cy="31" r="1" fill="#E8E8E8"/></svg>
<div class="t" style="left:1136.18px;top:396.05px;font-size:14.50px;color:#9EADC8;-webkit-text-stroke:.350px #9EADC8;">140.0K</div>
<div class="t" style="left:1136.18px;top:423.05px;font-size:14.50px;color:#9EADC8;-webkit-text-stroke:.350px #9EADC8;">135.0K</div>
<div class="t" style="left:1136.18px;top:449.05px;font-size:14.50px;color:#9EADC8;-webkit-text-stroke:.350px #9EADC8;">130.0K</div>
<div class="t" style="left:1136.18px;top:475.05px;font-size:14.50px;color:#9EADC8;-webkit-text-stroke:.350px #9EADC8;">125.0K</div>
<div class="t" style="left:1136.18px;top:502.05px;font-size:14.50px;color:#9EADC8;-webkit-text-stroke:.350px #9EADC8;">120.0K</div>
<div class="t" style="left:1137.27px;top:528.05px;font-size:14.50px;color:#9EADC8;-webkit-text-stroke:.350px #9EADC8;">115.0K</div>
<div class="t" style="left:1137.27px;top:554.05px;font-size:14.50px;color:#9EADC8;-webkit-text-stroke:.350px #9EADC8;">110.0K</div>
<div class="t" style="left:1136.18px;top:581.05px;font-size:14.50px;color:#9EADC8;-webkit-text-stroke:.350px #9EADC8;">105.0K</div>
<div class="t" style="left:1136.18px;top:607.05px;font-size:14.50px;color:#9EADC8;-webkit-text-stroke:.350px #9EADC8;">100.0K</div>
<div class="t" style="left:1144.30px;top:633.05px;font-size:14.50px;color:#9EADC8;-webkit-text-stroke:.350px #9EADC8;">95.0K</div>
<div class="t" style="left:1144.30px;top:659.05px;font-size:14.50px;color:#9EADC8;-webkit-text-stroke:.350px #9EADC8;">90.0K</div>
<div class="t" style="left:1144.30px;top:686.05px;font-size:14.50px;color:#9EADC8;-webkit-text-stroke:.350px #9EADC8;">85.0K</div>
<div class="t" style="left:1144.30px;top:712.05px;font-size:14.50px;color:#9EADC8;-webkit-text-stroke:.350px #9EADC8;">80.0K</div>
<div class="t" style="left:1267.09px;top:731.05px;font-size:14.50px;color:#9EADC8;-webkit-text-stroke:.350px #9EADC8;">Dec '21</div>
<div class="t" style="left:1362.45px;top:731.05px;font-size:14.50px;color:#9EADC8;-webkit-text-stroke:.350px #9EADC8;">15 Dec</div>
<div class="t" style="left:1477.33px;top:731.05px;font-size:14.50px;color:#9EADC8;-webkit-text-stroke:.350px #9EADC8;">Jan '22</div>
<div class="t" style="left:1572.78px;top:731.05px;font-size:14.50px;color:#9EADC8;-webkit-text-stroke:.350px #9EADC8;">15 Jan</div>
<div class="t" style="left:1684.12px;top:731.05px;font-size:14.50px;color:#9EADC8;-webkit-text-stroke:.350px #9EADC8;">Feb '22</div>
<div class="t" style="left:1852.66px;top:396.05px;font-size:14.50px;color:#9EADC8;-webkit-text-stroke:.350px #9EADC8;">2,400</div>
<div class="t" style="left:1852.66px;top:423.05px;font-size:14.50px;color:#9EADC8;-webkit-text-stroke:.350px #9EADC8;">2,200</div>
<div class="t" style="left:1852.66px;top:449.05px;font-size:14.50px;color:#9EADC8;-webkit-text-stroke:.350px #9EADC8;">2,000</div>
<div class="t" style="left:1852.66px;top:475.05px;font-size:14.50px;color:#9EADC8;-webkit-text-stroke:.350px #9EADC8;">1,800</div>
<div class="t" style="left:1852.66px;top:502.05px;font-size:14.50px;color:#9EADC8;-webkit-text-stroke:.350px #9EADC8;">1,600</div>
<div class="t" style="left:1852.66px;top:528.05px;font-size:14.50px;color:#9EADC8;-webkit-text-stroke:.350px #9EADC8;">1,400</div>
<div class="t" style="left:1852.66px;top:554.05px;font-size:14.50px;color:#9EADC8;-webkit-text-stroke:.350px #9EADC8;">1,200</div>
<div class="t" style="left:1852.66px;top:581.05px;font-size:14.50px;color:#9EADC8;-webkit-text-stroke:.350px #9EADC8;">1,000</div>
<div class="t" style="left:1864.77px;top:607.05px;font-size:14.50px;color:#9EADC8;-webkit-text-stroke:.350px #9EADC8;">800</div>
<div class="t" style="left:1864.77px;top:633.05px;font-size:14.50px;color:#9EADC8;-webkit-text-stroke:.350px #9EADC8;">600</div>
<div class="t" style="left:1864.77px;top:659.05px;font-size:14.50px;color:#9EADC8;-webkit-text-stroke:.350px #9EADC8;">400</div>
<div class="t" style="left:1864.77px;top:686.05px;font-size:14.50px;color:#9EADC8;-webkit-text-stroke:.350px #9EADC8;">200</div>
<div class="t" style="left:1880.86px;top:712.05px;font-size:14.50px;color:#9EADC8;-webkit-text-stroke:.350px #9EADC8;">0</div>
<div class="t" style="left:2024.36px;top:731.05px;font-size:14.50px;color:#9EADC8;-webkit-text-stroke:.350px #9EADC8;">24 Jan</div>
<div class="t" style="left:2182.62px;top:731.05px;font-size:14.50px;color:#9EADC8;-webkit-text-stroke:.350px #9EADC8;">Feb '22</div>
<div class="t" style="left:2325.85px;top:731.05px;font-size:14.50px;color:#9EADC8;-webkit-text-stroke:.350px #9EADC8;">08 Feb</div>
<div class="t" style="left:2487.20px;top:731.05px;font-size:14.50px;color:#9EADC8;-webkit-text-stroke:.350px #9EADC8;">16 Feb</div>
<div class="t" style="left:645.36px;top:1192.05px;font-size:14.50px;color:#9EADC8;-webkit-text-stroke:.350px #9EADC8;">2,600</div>
<div class="t" style="left:645.36px;top:1220.05px;font-size:14.50px;color:#9EADC8;-webkit-text-stroke:.350px #9EADC8;">2,400</div>
<div class="t" style="left:645.36px;top:1249.05px;font-size:14.50px;color:#9EADC8;-webkit-text-stroke:.350px #9EADC8;">2,200</div>
<div class="t" style="left:645.36px;top:1278.05px;font-size:14.50px;color:#9EADC8;-webkit-text-stroke:.350px #9EADC8;">2,000</div>
<div class="t" style="left:645.36px;top:1306.05px;font-size:14.50px;color:#9EADC8;-webkit-text-stroke:.350px #9EADC8;">1,800</div>
<div class="t" style="left:645.36px;top:1335.05px;font-size:14.50px;color:#9EADC8;-webkit-text-stroke:.350px #9EADC8;">1,600</div>
<div class="t" style="left:645.36px;top:1363.05px;font-size:14.50px;color:#9EADC8;-webkit-text-stroke:.350px #9EADC8;">1,400</div>
<div class="t" style="left:645.36px;top:1392.05px;font-size:14.50px;color:#9EADC8;-webkit-text-stroke:.350px #9EADC8;">1,200</div>
<div class="t" style="left:645.36px;top:1420.05px;font-size:14.50px;color:#9EADC8;-webkit-text-stroke:.350px #9EADC8;">1,000</div>
<div class="t" style="left:657.47px;top:1449.05px;font-size:14.50px;color:#9EADC8;-webkit-text-stroke:.350px #9EADC8;">800</div>
<div class="t" style="left:657.47px;top:1477.05px;font-size:14.50px;color:#9EADC8;-webkit-text-stroke:.350px #9EADC8;">600</div>
<div class="t" style="left:657.47px;top:1506.05px;font-size:14.50px;color:#9EADC8;-webkit-text-stroke:.350px #9EADC8;">400</div>
<div class="t" style="left:657.47px;top:1534.05px;font-size:14.50px;color:#9EADC8;-webkit-text-stroke:.350px #9EADC8;">200</div>
<div class="t" style="left:673.56px;top:1563.05px;font-size:14.50px;color:#9EADC8;-webkit-text-stroke:.350px #9EADC8;">0</div>
<div class="t" style="left:817.19px;top:1582.05px;font-size:14.50px;color:#9EADC8;-webkit-text-stroke:.350px #9EADC8;">Dec '21</div>
<div class="t" style="left:963.45px;top:1582.05px;font-size:14.50px;color:#9EADC8;-webkit-text-stroke:.350px #9EADC8;">15 Dec</div>
<div class="t" style="left:1140.73px;top:1582.05px;font-size:14.50px;color:#9EADC8;-webkit-text-stroke:.350px #9EADC8;">Jan '22</div>
<div class="t" style="left:1287.18px;top:1582.05px;font-size:14.50px;color:#9EADC8;-webkit-text-stroke:.350px #9EADC8;">15 Jan</div>
<div class="t" style="left:1461.22px;top:1582.05px;font-size:14.50px;color:#9EADC8;-webkit-text-stroke:.350px #9EADC8;">Feb '22</div>
<div class="t" style="left:1608.50px;top:1582.05px;font-size:14.50px;color:#9EADC8;-webkit-text-stroke:.350px #9EADC8;">15 Feb</div>
<div class="t" style="left:1687.13px;top:1027.05px;font-size:14.50px;color:#9EADC8;-webkit-text-stroke:.350px #9EADC8;">6</div>
<div class="t" style="left:1687.13px;top:1062.05px;font-size:14.50px;color:#9EADC8;-webkit-text-stroke:.350px #9EADC8;">5</div>
<div class="t" style="left:1687.13px;top:1096.05px;font-size:14.50px;color:#9EADC8;-webkit-text-stroke:.350px #9EADC8;">5</div>
<div class="t" style="left:1686.99px;top:1130.05px;font-size:14.50px;color:#9EADC8;-webkit-text-stroke:.350px #9EADC8;">4</div>
<div class="t" style="left:1687.13px;top:1165.05px;font-size:14.50px;color:#9EADC8;-webkit-text-stroke:.350px #9EADC8;">3</div>
<div class="t" style="left:1687.28px;top:1199.05px;font-size:14.50px;color:#9EADC8;-webkit-text-stroke:.350px #9EADC8;">2</div>
<div class="t" style="left:1687.20px;top:1234.05px;font-size:14.50px;color:#9EADC8;-webkit-text-stroke:.350px #9EADC8;">1</div>
<div class="t" style="left:1773.56px;top:1252.05px;font-size:14.50px;color:#9EADC8;-webkit-text-stroke:.350px #9EADC8;">24 Jan</div>
<div class="t" style="left:1869.72px;top:1252.05px;font-size:14.50px;color:#9EADC8;-webkit-text-stroke:.350px #9EADC8;">Feb '22</div>
<div class="t" style="left:1957.45px;top:1252.05px;font-size:14.50px;color:#9EADC8;-webkit-text-stroke:.350px #9EADC8;">08 Feb</div>
<div class="t" style="left:1685.26px;top:1356.05px;font-size:14.50px;color:#9EADC8;-webkit-text-stroke:.350px #9EADC8;">1,200</div>
<div class="t" style="left:1685.26px;top:1391.05px;font-size:14.50px;color:#9EADC8;-webkit-text-stroke:.350px #9EADC8;">1,000</div>
<div class="t" style="left:1697.37px;top:1425.05px;font-size:14.50px;color:#9EADC8;-webkit-text-stroke:.350px #9EADC8;">800</div>
<div class="t" style="left:1697.37px;top:1460.05px;font-size:14.50px;color:#9EADC8;-webkit-text-stroke:.350px #9EADC8;">600</div>
<div class="t" style="left:1697.37px;top:1494.05px;font-size:14.50px;color:#9EADC8;-webkit-text-stroke:.350px #9EADC8;">400</div>
<div class="t" style="left:1697.37px;top:1529.05px;font-size:14.50px;color:#9EADC8;-webkit-text-stroke:.350px #9EADC8;">200</div>
<div class="t" style="left:1713.46px;top:1563.05px;font-size:14.50px;color:#9EADC8;-webkit-text-stroke:.350px #9EADC8;">0</div>
<div class="t" style="left:1894.76px;top:1582.05px;font-size:14.50px;color:#9EADC8;-webkit-text-stroke:.350px #9EADC8;">24 Jan</div>
<div class="t" style="left:2096.72px;top:1582.05px;font-size:14.50px;color:#9EADC8;-webkit-text-stroke:.350px #9EADC8;">Feb '22</div>
<div class="t" style="left:2277.65px;top:1582.05px;font-size:14.50px;color:#9EADC8;-webkit-text-stroke:.350px #9EADC8;">08 Feb</div>
<div class="t" style="left:2482.00px;top:1582.05px;font-size:14.50px;color:#9EADC8;-webkit-text-stroke:.350px #9EADC8;">16 Feb</div>
<svg class="i" style="left:0;top:0" width="2880" height="1750" viewBox="0 0 2880 1750"><path d="M1196.0 403.20H1816.0" stroke="#F3F4F7" stroke-width="1.400"/><path d="M1196.0 429.52H1816.0" stroke="#F3F4F7" stroke-width="1.400"/><path d="M1196.0 455.83H1816.0" stroke="#F3F4F7" stroke-width="1.400"/><path d="M1196.0 482.15H1816.0" stroke="#F3F4F7" stroke-width="1.400"/><path d="M1196.0 508.47H1816.0" stroke="#F3F4F7" stroke-width="1.400"/><path d="M1196.0 534.78H1816.0" stroke="#F3F4F7" stroke-width="1.400"/><path d="M1196.0 561.10H1816.0" stroke="#F3F4F7" stroke-width="1.400"/><path d="M1196.0 587.42H1816.0" stroke="#F3F4F7" stroke-width="1.400"/><path d="M1196.0 613.73H1816.0" stroke="#F3F4F7" stroke-width="1.400"/><path d="M1196.0 640.05H1816.0" stroke="#F3F4F7" stroke-width="1.400"/><path d="M1196.0 666.37H1816.0" stroke="#F3F4F7" stroke-width="1.400"/><path d="M1196.0 692.68H1816.0" stroke="#F3F4F7" stroke-width="1.400"/><path d="M1196.0 719.00H1816.0" stroke="#F3F4F7" stroke-width="1.400"/><linearGradient id="g1" x1="0" y1="0" x2="0" y2="1"><stop offset="0" stop-color="#646ED8" stop-opacity="0.21"/><stop offset=".92" stop-color="#646ED8" stop-opacity="0"/></linearGradient><clipPath id="cg1"><rect x="1193" y="380" width="640" height="345"/></clipPath><g clip-path="url(#cg1)"><path d="M1096.86 685.20C1168.29 685.20 1229.51 593.52 1300.94 593.52C1372.37 593.52 1433.59 483.31 1505.02 483.31C1577.00 483.31 1638.70 437.79 1710.68 437.79L1710.68 723.00L1096.86 723.00Z" fill="url(#g1)"/><path d="M1096.86 685.20C1168.29 685.20 1229.51 593.52 1300.94 593.52C1372.37 593.52 1433.59 483.31 1505.02 483.31C1577.00 483.31 1638.70 437.79 1710.68 437.79" fill="none" stroke="#646ED8" stroke-width="2.8" stroke-linecap="round" stroke-linejoin="round"/></g><path d="M1904.0 403.20H2528.0" stroke="#F3F4F7" stroke-width="1.400"/><path d="M1904.0 429.52H2528.0" stroke="#F3F4F7" stroke-width="1.400"/><path d="M1904.0 455.83H2528.0" stroke="#F3F4F7" stroke-width="1.400"/><path d="M1904.0 482.15H2528.0" stroke="#F3F4F7" stroke-width="1.400"/><path d="M1904.0 508.47H2528.0" stroke="#F3F4F7" stroke-width="1.400"/><path d="M1904.0 534.78H2528.0" stroke="#F3F4F7" stroke-width="1.400"/><path d="M1904.0 561.10H2528.0" stroke="#F3F4F7" stroke-width="1.400"/><path d="M1904.0 587.42H2528.0" stroke="#F3F4F7" stroke-width="1.400"/><path d="M1904.0 613.73H2528.0" stroke="#F3F4F7" stroke-width="1.400"/><path d="M1904.0 640.05H2528.0" stroke="#F3F4F7" stroke-width="1.400"/><path d="M1904.0 666.37H2528.0" stroke="#F3F4F7" stroke-width="1.400"/><path d="M1904.0 692.68H2528.0" stroke="#F3F4F7" stroke-width="1.400"/><path d="M1904.0 719.00H2528.0" stroke="#F3F4F7" stroke-width="1.400"/><linearGradient id="g2" x1="0" y1="0" x2="0" y2="1"><stop offset="0" stop-color="#646ED8" stop-opacity="0.21"/><stop offset=".92" stop-color="#646ED8" stop-opacity="0"/></linearGradient><g><path d="M1908.90 577.42C1915.98 577.42 1922.04 447.15 1929.12 447.15C1936.19 447.15 1942.26 612.02 1949.33 612.02C1956.41 612.02 1962.47 583.73 1969.55 583.73C1976.63 583.73 1982.69 475.44 1989.77 475.44C1996.84 475.44 2002.91 658.47 2009.98 658.47C2017.06 658.47 2023.12 562.68 2030.20 562.68C2037.28 562.68 2043.34 611.36 2050.42 611.36C2057.49 611.36 2063.56 685.71 2070.63 685.71C2077.71 685.71 2083.77 601.89 2090.85 601.89C2097.93 601.89 2103.99 617.68 2111.07 617.68C2118.14 617.68 2124.21 523.47 2131.28 523.47C2138.36 523.47 2144.42 584.65 2151.50 584.65C2158.58 584.65 2164.64 640.58 2171.72 640.58C2178.79 640.58 2184.86 442.81 2191.93 442.81C2199.01 442.81 2205.07 620.71 2212.15 620.71C2219.23 620.71 2225.29 598.21 2232.37 598.21C2239.44 598.21 2245.51 499.91 2252.58 499.91C2259.66 499.91 2265.72 409.78 2272.80 409.78C2279.88 409.78 2285.94 552.68 2293.02 552.68C2300.09 552.68 2306.16 571.50 2313.23 571.50C2320.31 571.50 2326.37 470.04 2333.45 470.04C2340.53 470.04 2346.59 601.23 2353.67 601.23C2360.74 601.23 2366.81 641.10 2373.88 641.10C2380.96 641.10 2387.02 465.31 2394.10 465.31C2401.18 465.31 2407.24 676.37 2414.32 676.37C2421.39 676.37 2427.46 611.36 2434.53 611.36C2441.61 611.36 2447.67 718.74 2454.75 718.74C2461.83 718.74 2467.89 718.74 2474.97 718.74C2482.04 718.74 2488.11 716.76 2495.18 716.76C2502.26 716.76 2508.32 716.76 2515.40 716.76L2515.40 723.00L1908.90 723.00Z" fill="url(#g2)"/><path d="M1908.90 577.42C1915.98 577.42 1922.04 447.15 1929.12 447.15C1936.19 447.15 1942.26 612.02 1949.33 612.02C1956.41 612.02 1962.47 583.73 1969.55 583.73C1976.63 583.73 1982.69 475.44 1989.77 475.44C1996.84 475.44 2002.91 658.47 2009.98 658.47C2017.06 658.47 2023.12 562.68 2030.20 562.68C2037.28 562.68 2043.34 611.36 2050.42 611.36C2057.49 611.36 2063.56 685.71 2070.63 685.71C2077.71 685.71 2083.77 601.89 2090.85 601.89C2097.93 601.89 2103.99 617.68 2111.07 617.68C2118.14 617.68 2124.21 523.47 2131.28 523.47C2138.36 523.47 2144.42 584.65 2151.50 584.65C2158.58 584.65 2164.64 640.58 2171.72 640.58C2178.79 640.58 2184.86 442.81 2191.93 442.81C2199.01 442.81 2205.07 620.71 2212.15 620.71C2219.23 620.71 2225.29 598.21 2232.37 598.21C2239.44 598.21 2245.51 499.91 2252.58 499.91C2259.66 499.91 2265.72 409.78 2272.80 409.78C2279.88 409.78 2285.94 552.68 2293.02 552.68C2300.09 552.68 2306.16 571.50 2313.23 571.50C2320.31 571.50 2326.37 470.04 2333.45 470.04C2340.53 470.04 2346.59 601.23 2353.67 601.23C2360.74 601.23 2366.81 641.10 2373.88 641.10C2380.96 641.10 2387.02 465.31 2394.10 465.31C2401.18 465.31 2407.24 676.37 2414.32 676.37C2421.39 676.37 2427.46 611.36 2434.53 611.36C2441.61 611.36 2447.67 718.74 2454.75 718.74C2461.83 718.74 2467.89 718.74 2474.97 718.74C2482.04 718.74 2488.11 716.76 2495.18 716.76C2502.26 716.76 2508.32 716.76 2515.40 716.76" fill="none" stroke="#646ED8" stroke-width="2.8" stroke-linecap="round" stroke-linejoin="round"/></g><path d="M696.0 1198.80H1652.0" stroke="#F3F4F7" stroke-width="1.400"/><path d="M696.0 1227.35H1652.0" stroke="#F3F4F7" stroke-width="1.400"/><path d="M696.0 1255.89H1652.0" stroke="#F3F4F7" stroke-width="1.400"/><path d="M696.0 1284.44H1652.0" stroke="#F3F4F7" stroke-width="1.400"/><path d="M696.0 1312.98H1652.0" stroke="#F3F4F7" stroke-width="1.400"/><path d="M696.0 1341.53H1652.0" stroke="#F3F4F7" stroke-width="1.400"/><path d="M696.0 1370.08H1652.0" stroke="#F3F4F7" stroke-width="1.400"/><path d="M696.0 1398.62H1652.0" stroke="#F3F4F7" stroke-width="1.400"/><path d="M696.0 1427.17H1652.0" stroke="#F3F4F7" stroke-width="1.400"/><path d="M696.0 1455.72H1652.0" stroke="#F3F4F7" stroke-width="1.400"/><path d="M696.0 1484.26H1652.0" stroke="#F3F4F7" stroke-width="1.400"/><path d="M696.0 1512.81H1652.0" stroke="#F3F4F7" stroke-width="1.400"/><path d="M696.0 1541.35H1652.0" stroke="#F3F4F7" stroke-width="1.400"/><path d="M696.0 1569.90H1652.0" stroke="#F3F4F7" stroke-width="1.400"/><linearGradient id="g3" x1="0" y1="0" x2="0" y2="1"><stop offset="0" stop-color="#00C897" stop-opacity="0.23"/><stop offset=".92" stop-color="#00C897" stop-opacity="0"/></linearGradient><g><path d="M708.50 1530.79C712.14 1530.79 715.26 1457.29 718.90 1457.29C722.54 1457.29 725.66 1439.02 729.30 1439.02C732.94 1439.02 736.06 1482.41 739.70 1482.41C743.34 1482.41 746.46 1409.90 750.10 1409.90C753.74 1409.90 756.85 1450.01 760.49 1450.01C764.13 1450.01 767.25 1403.90 770.89 1403.90C774.53 1403.90 777.65 1356.09 781.29 1356.09C784.93 1356.09 788.05 1519.80 791.69 1519.80C795.33 1519.80 798.45 1415.61 802.09 1415.61C805.73 1415.61 808.85 1377.93 812.49 1377.93C816.13 1377.93 819.25 1487.40 822.89 1487.40C826.53 1487.40 829.65 1480.69 833.29 1480.69C836.93 1480.69 840.05 1287.01 843.69 1287.01C847.33 1287.01 850.44 1397.20 854.08 1397.20C857.72 1397.20 860.84 1487.40 864.48 1487.40C868.12 1487.40 871.24 1292.72 874.88 1292.72C878.52 1292.72 881.64 1397.91 885.28 1397.91C888.92 1397.91 892.04 1353.81 895.68 1353.81C899.32 1353.81 902.44 1454.00 906.08 1454.00C909.72 1454.00 912.84 1503.39 916.48 1503.39C920.12 1503.39 923.24 1226.92 926.88 1226.92C930.52 1226.92 933.64 1460.00 937.28 1460.00C940.92 1460.00 944.03 1376.50 947.67 1376.50C951.31 1376.50 954.43 1514.24 958.07 1514.24C961.71 1514.24 964.83 1421.32 968.47 1421.32C972.11 1421.32 975.23 1561.62 978.87 1561.62C982.51 1561.62 985.63 1548.20 989.27 1548.20C992.91 1548.20 996.03 1540.21 999.67 1540.21C1003.31 1540.21 1006.43 1533.50 1010.07 1533.50C1013.71 1533.50 1016.83 1534.79 1020.47 1534.79C1024.11 1534.79 1027.23 1481.41 1030.87 1481.41C1034.51 1481.41 1037.62 1428.03 1041.26 1428.03C1044.90 1428.03 1048.02 1507.53 1051.66 1507.53C1055.30 1507.53 1058.42 1480.69 1062.06 1480.69C1065.70 1480.69 1068.82 1553.20 1072.46 1553.20C1076.10 1553.20 1079.22 1444.73 1082.86 1444.73C1086.50 1444.73 1089.62 1555.20 1093.26 1555.20C1096.90 1555.20 1100.02 1545.92 1103.66 1545.92C1107.30 1545.92 1110.42 1403.33 1114.06 1403.33C1117.70 1403.33 1120.82 1425.74 1124.46 1425.74C1128.10 1425.74 1131.21 1455.72 1134.85 1455.72C1138.49 1455.72 1141.61 1386.63 1145.25 1386.63C1148.89 1386.63 1152.01 1528.22 1155.65 1528.22C1159.29 1528.22 1162.41 1432.31 1166.05 1432.31C1169.69 1432.31 1172.81 1501.39 1176.45 1501.39C1180.09 1501.39 1183.21 1489.11 1186.85 1489.11C1190.49 1489.11 1193.61 1538.21 1197.25 1538.21C1200.89 1538.21 1204.01 1317.69 1207.65 1317.69C1211.29 1317.69 1214.41 1301.00 1218.05 1301.00C1221.69 1301.00 1224.80 1321.41 1228.44 1321.41C1232.08 1321.41 1235.20 1484.12 1238.84 1484.12C1242.48 1484.12 1245.60 1522.51 1249.24 1522.51C1252.88 1522.51 1256.00 1401.62 1259.64 1401.62C1263.28 1401.62 1266.40 1493.40 1270.04 1493.40C1273.68 1493.40 1276.80 1499.11 1280.44 1499.11C1284.08 1499.11 1287.20 1504.81 1290.84 1504.81C1294.48 1504.81 1297.60 1556.91 1301.24 1556.91C1304.88 1556.91 1308.00 1535.22 1311.64 1535.22C1315.28 1535.22 1318.39 1556.91 1322.03 1556.91C1325.67 1556.91 1328.79 1552.49 1332.43 1552.49C1336.07 1552.49 1339.19 1524.80 1342.83 1524.80C1346.47 1524.80 1349.59 1508.53 1353.23 1508.53C1356.87 1508.53 1359.99 1546.49 1363.63 1546.49C1367.27 1546.49 1370.39 1432.02 1374.03 1432.02C1377.67 1432.02 1380.79 1441.30 1384.43 1441.30C1388.07 1441.30 1391.19 1460.71 1394.83 1460.71C1398.47 1460.71 1401.59 1431.59 1405.23 1431.59C1408.87 1431.59 1411.98 1459.00 1415.62 1459.00C1419.26 1459.00 1422.38 1535.79 1426.02 1535.79C1429.66 1535.79 1432.78 1438.02 1436.42 1438.02C1440.06 1438.02 1443.18 1509.81 1446.82 1509.81C1450.46 1509.81 1453.58 1366.22 1457.22 1366.22C1460.86 1366.22 1463.98 1534.22 1467.62 1534.22C1471.26 1534.22 1474.38 1406.62 1478.02 1406.62C1481.66 1406.62 1484.78 1501.82 1488.42 1501.82C1492.06 1501.82 1495.18 1504.10 1498.82 1504.10C1502.46 1504.10 1505.57 1273.73 1509.21 1273.73C1512.85 1273.73 1515.97 1370.51 1519.61 1370.51C1523.25 1370.51 1526.37 1519.09 1530.01 1519.09C1533.65 1519.09 1536.77 1337.11 1540.41 1337.11C1544.05 1337.11 1547.17 1236.20 1550.81 1236.20C1554.45 1236.20 1557.57 1451.29 1561.21 1451.29C1564.85 1451.29 1567.97 1462.42 1571.61 1462.42C1575.25 1462.42 1578.37 1342.10 1582.01 1342.10C1585.65 1342.10 1588.77 1250.90 1592.41 1250.90C1596.05 1250.90 1599.16 1410.61 1602.80 1410.61C1606.44 1410.61 1609.56 1555.91 1613.20 1555.91C1616.84 1555.91 1619.96 1493.11 1623.60 1493.11C1627.24 1493.11 1630.36 1515.81 1634.00 1515.81C1637.64 1515.81 1640.76 1479.69 1644.40 1479.69L1644.40 1571.90L708.50 1571.90Z" fill="url(#g3)"/><path d="M708.50 1530.79C712.14 1530.79 715.26 1457.29 718.90 1457.29C722.54 1457.29 725.66 1439.02 729.30 1439.02C732.94 1439.02 736.06 1482.41 739.70 1482.41C743.34 1482.41 746.46 1409.90 750.10 1409.90C753.74 1409.90 756.85 1450.01 760.49 1450.01C764.13 1450.01 767.25 1403.90 770.89 1403.90C774.53 1403.90 777.65 1356.09 781.29 1356.09C784.93 1356.09 788.05 1519.80 791.69 1519.80C795.33 1519.80 798.45 1415.61 802.09 1415.61C805.73 1415.61 808.85 1377.93 812.49 1377.93C816.13 1377.93 819.25 1487.40 822.89 1487.40C826.53 1487.40 829.65 1480.69 833.29 1480.69C836.93 1480.69 840.05 1287.01 843.69 1287.01C847.33 1287.01 850.44 1397.20 854.08 1397.20C857.72 1397.20 860.84 1487.40 864.48 1487.40C868.12 1487.40 871.24 1292.72 874.88 1292.72C878.52 1292.72 881.64 1397.91 885.28 1397.91C888.92 1397.91 892.04 1353.81 895.68 1353.81C899.32 1353.81 902.44 1454.00 906.08 1454.00C909.72 1454.00 912.84 1503.39 916.48 1503.39C920.12 1503.39 923.24 1226.92 926.88 1226.92C930.52 1226.92 933.64 1460.00 937.28 1460.00C940.92 1460.00 944.03 1376.50 947.67 1376.50C951.31 1376.50 954.43 1514.24 958.07 1514.24C961.71 1514.24 964.83 1421.32 968.47 1421.32C972.11 1421.32 975.23 1561.62 978.87 1561.62C982.51 1561.62 985.63 1548.20 989.27 1548.20C992.91 1548.20 996.03 1540.21 999.67 1540.21C1003.31 1540.21 1006.43 1533.50 1010.07 1533.50C1013.71 1533.50 1016.83 1534.79 1020.47 1534.79C1024.11 1534.79 1027.23 1481.41 1030.87 1481.41C1034.51 1481.41 1037.62 1428.03 1041.26 1428.03C1044.90 1428.03 1048.02 1507.53 1051.66 1507.53C1055.30 1507.53 1058.42 1480.69 1062.06 1480.69C1065.70 1480.69 1068.82 1553.20 1072.46 1553.20C1076.10 1553.20 1079.22 1444.73 1082.86 1444.73C1086.50 1444.73 1089.62 1555.20 1093.26 1555.20C1096.90 1555.20 1100.02 1545.92 1103.66 1545.92C1107.30 1545.92 1110.42 1403.33 1114.06 1403.33C1117.70 1403.33 1120.82 1425.74 1124.46 1425.74C1128.10 1425.74 1131.21 1455.72 1134.85 1455.72C1138.49 1455.72 1141.61 1386.63 1145.25 1386.63C1148.89 1386.63 1152.01 1528.22 1155.65 1528.22C1159.29 1528.22 1162.41 1432.31 1166.05 1432.31C1169.69 1432.31 1172.81 1501.39 1176.45 1501.39C1180.09 1501.39 1183.21 1489.11 1186.85 1489.11C1190.49 1489.11 1193.61 1538.21 1197.25 1538.21C1200.89 1538.21 1204.01 1317.69 1207.65 1317.69C1211.29 1317.69 1214.41 1301.00 1218.05 1301.00C1221.69 1301.00 1224.80 1321.41 1228.44 1321.41C1232.08 1321.41 1235.20 1484.12 1238.84 1484.12C1242.48 1484.12 1245.60 1522.51 1249.24 1522.51C1252.88 1522.51 1256.00 1401.62 1259.64 1401.62C1263.28 1401.62 1266.40 1493.40 1270.04 1493.40C1273.68 1493.40 1276.80 1499.11 1280.44 1499.11C1284.08 1499.11 1287.20 1504.81 1290.84 1504.81C1294.48 1504.81 1297.60 1556.91 1301.24 1556.91C1304.88 1556.91 1308.00 1535.22 1311.64 1535.22C1315.28 1535.22 1318.39 1556.91 1322.03 1556.91C1325.67 1556.91 1328.79 1552.49 1332.43 1552.49C1336.07 1552.49 1339.19 1524.80 1342.83 1524.80C1346.47 1524.80 1349.59 1508.53 1353.23 1508.53C1356.87 1508.53 1359.99 1546.49 1363.63 1546.49C1367.27 1546.49 1370.39 1432.02 1374.03 1432.02C1377.67 1432.02 1380.79 1441.30 1384.43 1441.30C1388.07 1441.30 1391.19 1460.71 1394.83 1460.71C1398.47 1460.71 1401.59 1431.59 1405.23 1431.59C1408.87 1431.59 1411.98 1459.00 1415.62 1459.00C1419.26 1459.00 1422.38 1535.79 1426.02 1535.79C1429.66 1535.79 1432.78 1438.02 1436.42 1438.02C1440.06 1438.02 1443.18 1509.81 1446.82 1509.81C1450.46 1509.81 1453.58 1366.22 1457.22 1366.22C1460.86 1366.22 1463.98 1534.22 1467.62 1534.22C1471.26 1534.22 1474.38 1406.62 1478.02 1406.62C1481.66 1406.62 1484.78 1501.82 1488.42 1501.82C1492.06 1501.82 1495.18 1504.10 1498.82 1504.10C1502.46 1504.10 1505.57 1273.73 1509.21 1273.73C1512.85 1273.73 1515.97 1370.51 1519.61 1370.51C1523.25 1370.51 1526.37 1519.09 1530.01 1519.09C1533.65 1519.09 1536.77 1337.11 1540.41 1337.11C1544.05 1337.11 1547.17 1236.20 1550.81 1236.20C1554.45 1236.20 1557.57 1451.29 1561.21 1451.29C1564.85 1451.29 1567.97 1462.42 1571.61 1462.42C1575.25 1462.42 1578.37 1342.10 1582.01 1342.10C1585.65 1342.10 1588.77 1250.90 1592.41 1250.90C1596.05 1250.90 1599.16 1410.61 1602.80 1410.61C1606.44 1410.61 1609.56 1555.91 1613.20 1555.91C1616.84 1555.91 1619.96 1493.11 1623.60 1493.11C1627.24 1493.11 1630.36 1515.81 1634.00 1515.81C1637.64 1515.81 1640.76 1479.69 1644.40 1479.69" fill="none" stroke="#00C897" stroke-width="2.8" stroke-linecap="round" stroke-linejoin="round"/></g><path d="M1708.6 1034.00H2092.6" stroke="#F3F4F7" stroke-width="1.400"/><path d="M1708.6 1068.42H2092.6" stroke="#F3F4F7" stroke-width="1.400"/><path d="M1708.6 1102.83H2092.6" stroke="#F3F4F7" stroke-width="1.400"/><path d="M1708.6 1137.25H2092.6" stroke="#F3F4F7" stroke-width="1.400"/><path d="M1708.6 1171.67H2092.6" stroke="#F3F4F7" stroke-width="1.400"/><path d="M1708.6 1206.08H2092.6" stroke="#F3F4F7" stroke-width="1.400"/><path d="M1708.6 1240.50H2092.6" stroke="#F3F4F7" stroke-width="1.400"/><linearGradient id="g4" x1="0" y1="0" x2="0" y2="1"><stop offset="0" stop-color="#00C897" stop-opacity="0.25"/><stop offset=".92" stop-color="#00C897" stop-opacity="0"/></linearGradient><clipPath id="cg4"><rect x="1700" y="1033.3" width="400" height="215"/></clipPath><g clip-path="url(#cg4)"><path d="M1711.90 1237.00C1716.22 1237.00 1719.92 1198.53 1724.24 1198.53C1728.56 1198.53 1732.26 1160.06 1736.58 1160.06C1740.90 1160.06 1744.60 1237.00 1748.92 1237.00C1753.24 1237.00 1756.94 1006.18 1761.26 1006.18C1765.58 1006.18 1769.28 1044.65 1773.60 1044.65C1777.92 1044.65 1781.62 1083.12 1785.94 1083.12C1790.26 1083.12 1793.96 1121.59 1798.28 1121.59C1802.60 1121.59 1806.30 1121.59 1810.62 1121.59C1814.94 1121.59 1818.64 1237.00 1822.96 1237.00C1827.28 1237.00 1830.98 1121.59 1835.30 1121.59C1839.62 1121.59 1843.32 1198.53 1847.64 1198.53C1851.96 1198.53 1855.66 1044.65 1859.98 1044.65C1864.30 1044.65 1868.00 1237.00 1872.32 1237.00C1876.64 1237.00 1880.34 1121.59 1884.66 1121.59C1888.98 1121.59 1892.68 1198.53 1897.00 1198.53C1901.32 1198.53 1905.02 1198.53 1909.34 1198.53C1913.66 1198.53 1917.36 1044.65 1921.68 1044.65C1926.00 1044.65 1929.70 1083.12 1934.02 1083.12C1938.34 1083.12 1942.04 1237.00 1946.36 1237.00C1950.68 1237.00 1954.38 1083.12 1958.70 1083.12C1963.02 1083.12 1966.72 1044.65 1971.04 1044.65C1975.36 1044.65 1979.06 1198.53 1983.38 1198.53C1987.70 1198.53 1991.40 1198.53 1995.72 1198.53C2000.04 1198.53 2003.74 1121.59 2008.06 1121.59C2012.38 1121.59 2016.08 1044.65 2020.40 1044.65C2024.72 1044.65 2028.42 1160.06 2032.74 1160.06C2037.06 1160.06 2040.76 1237.00 2045.08 1237.00C2049.40 1237.00 2053.10 1121.59 2057.42 1121.59C2061.74 1121.59 2065.44 1160.06 2069.76 1160.06C2074.08 1160.06 2077.78 1121.59 2082.10 1121.59L2082.10 1242.50L1711.90 1242.50Z" fill="url(#g4)"/><path d="M1711.90 1237.00C1716.22 1237.00 1719.92 1198.53 1724.24 1198.53C1728.56 1198.53 1732.26 1160.06 1736.58 1160.06C1740.90 1160.06 1744.60 1237.00 1748.92 1237.00C1753.24 1237.00 1756.94 1006.18 1761.26 1006.18C1765.58 1006.18 1769.28 1044.65 1773.60 1044.65C1777.92 1044.65 1781.62 1083.12 1785.94 1083.12C1790.26 1083.12 1793.96 1121.59 1798.28 1121.59C1802.60 1121.59 1806.30 1121.59 1810.62 1121.59C1814.94 1121.59 1818.64 1237.00 1822.96 1237.00C1827.28 1237.00 1830.98 1121.59 1835.30 1121.59C1839.62 1121.59 1843.32 1198.53 1847.64 1198.53C1851.96 1198.53 1855.66 1044.65 1859.98 1044.65C1864.30 1044.65 1868.00 1237.00 1872.32 1237.00C1876.64 1237.00 1880.34 1121.59 1884.66 1121.59C1888.98 1121.59 1892.68 1198.53 1897.00 1198.53C1901.32 1198.53 1905.02 1198.53 1909.34 1198.53C1913.66 1198.53 1917.36 1044.65 1921.68 1044.65C1926.00 1044.65 1929.70 1083.12 1934.02 1083.12C1938.34 1083.12 1942.04 1237.00 1946.36 1237.00C1950.68 1237.00 1954.38 1083.12 1958.70 1083.12C1963.02 1083.12 1966.72 1044.65 1971.04 1044.65C1975.36 1044.65 1979.06 1198.53 1983.38 1198.53C1987.70 1198.53 1991.40 1198.53 1995.72 1198.53C2000.04 1198.53 2003.74 1121.59 2008.06 1121.59C2012.38 1121.59 2016.08 1044.65 2020.40 1044.65C2024.72 1044.65 2028.42 1160.06 2032.74 1160.06C2037.06 1160.06 2040.76 1237.00 2045.08 1237.00C2049.40 1237.00 2053.10 1121.59 2057.42 1121.59C2061.74 1121.59 2065.44 1160.06 2069.76 1160.06C2074.08 1160.06 2077.78 1121.59 2082.10 1121.59" fill="none" stroke="#00C897" stroke-width="2.8" stroke-linecap="round" stroke-linejoin="round"/></g><path d="M1736.0 1363.30H2528.4" stroke="#F3F4F7" stroke-width="1.400"/><path d="M1736.0 1397.75H2528.4" stroke="#F3F4F7" stroke-width="1.400"/><path d="M1736.0 1432.20H2528.4" stroke="#F3F4F7" stroke-width="1.400"/><path d="M1736.0 1466.65H2528.4" stroke="#F3F4F7" stroke-width="1.400"/><path d="M1736.0 1501.10H2528.4" stroke="#F3F4F7" stroke-width="1.400"/><path d="M1736.0 1535.55H2528.4" stroke="#F3F4F7" stroke-width="1.400"/><path d="M1736.0 1570.00H2528.4" stroke="#F3F4F7" stroke-width="1.400"/><linearGradient id="g5" x1="0" y1="0" x2="0" y2="1"><stop offset="0" stop-color="#00C897" stop-opacity="0.2"/><stop offset=".92" stop-color="#00C897" stop-opacity="0"/></linearGradient><g><path d="M1745.34 1549.65L1750.94 1550.02L1764.01 1548.16L1778.94 1546.66L1781.75 1545.36L1787.35 1539.38L1790.15 1538.26L1793.88 1538.26L1801.35 1539.76L1809.75 1541.62L1813.48 1541.62L1815.35 1550.96L1816.28 1544.98L1825.62 1544.05L1834.95 1542.00L1843.35 1541.25L1845.22 1543.49L1848.02 1550.02L1849.89 1552.82L1854.55 1550.02L1856.05 1536.02L1856.98 1536.02L1859.22 1545.92L1863.89 1546.66L1867.25 1548.16L1874.16 1543.49L1878.82 1541.25L1879.38 1526.31L1880.69 1525.94L1883.49 1536.96L1884.80 1536.02L1887.22 1521.09L1889.09 1520.34L1891.89 1526.69L1895.62 1536.96L1897.49 1537.89L1901.23 1545.36L1903.09 1544.98L1904.03 1542.00L1906.83 1542.00L1913.36 1546.66L1918.03 1548.16L1919.89 1545.92L1922.69 1543.86L1928.30 1536.02L1932.96 1530.42L1937.63 1528.18L1940.43 1524.82L1942.86 1523.33L1944.72 1537.89L1946.03 1537.52L1950.70 1522.02L1953.50 1514.55L1954.81 1513.99L1955.37 1533.60L1960.03 1532.29L1967.50 1528.56L1971.23 1528.18L1990.84 1528.56L1997.37 1523.89L2001.10 1521.09L2003.90 1520.15L2007.64 1494.95L2010.06 1494.02L2013.24 1511.75L2016.04 1535.09L2017.91 1536.96L2021.64 1528.56L2024.44 1526.13L2027.24 1526.69L2031.91 1531.36L2038.44 1538.82L2043.11 1540.69L2045.91 1536.96L2049.64 1528.18L2051.51 1527.06L2052.44 1537.89L2054.31 1537.52L2058.98 1530.42L2062.71 1526.13L2064.20 1525.75L2066.44 1529.49L2071.67 1535.65L2072.61 1519.22L2076.71 1519.22L2083.25 1522.02L2092.58 1525.75L2099.12 1526.69L2100.00 1528.56L2102.80 1532.85L2104.67 1529.49L2105.60 1502.05L2107.84 1502.05L2112.13 1507.09L2117.74 1516.42L2121.47 1519.78L2125.20 1520.71L2129.87 1525.75L2132.67 1527.62L2142.94 1529.12L2152.27 1530.42L2156.01 1525.19L2158.81 1524.82L2164.41 1534.16L2167.58 1536.02L2170.94 1530.42L2175.61 1522.02L2179.34 1519.78L2183.08 1512.69L2185.88 1508.95L2187.74 1489.35L2190.54 1433.34L2193.34 1394.14L2195.58 1384.81L2197.08 1383.31L2198.01 1433.34L2198.57 1508.95L2200.81 1509.51L2207.35 1518.29L2211.08 1519.78L2215.75 1529.49L2217.99 1531.36L2220.41 1517.35L2224.15 1487.48L2226.57 1477.22L2227.88 1475.91L2228.44 1515.11L2230.31 1514.55L2231.62 1510.26L2236.28 1508.95L2241.88 1510.26L2251.22 1515.49L2258.69 1519.22L2265.22 1520.15L2270.82 1519.22L2272.69 1516.42L2273.99 1502.79L2275.49 1502.42L2278.29 1511.75L2280.15 1511.75L2284.82 1502.42L2288.56 1494.02L2290.80 1492.15L2292.29 1520.71L2293.22 1520.15L2294.72 1422.14L2296.02 1420.65L2296.40 1526.69L2297.89 1525.75L2300.69 1506.15L2303.49 1489.35L2307.22 1487.48L2310.58 1485.06L2313.20 1485.24L2316.56 1494.95L2321.23 1508.95L2323.65 1512.69L2326.83 1509.89L2333.36 1497.75L2338.03 1489.35L2340.83 1488.42L2341.76 1521.65L2344.56 1521.46L2352.03 1515.49L2358.56 1510.82L2361.36 1509.51L2364.16 1502.42L2366.96 1496.82L2374.43 1494.39L2380.03 1492.52L2382.27 1492.71L2384.70 1512.69L2387.50 1514.55L2393.10 1518.29L2395.90 1520.15L2398.70 1502.42L2400.94 1493.64L2403.37 1494.95L2405.24 1495.88L2408.04 1495.51L2410.84 1499.62L2415.50 1511.75L2418.30 1516.42L2420.73 1516.05L2423.90 1502.42L2426.33 1495.32L2427.64 1494.95L2428.57 1504.29L2432.31 1508.02L2436.04 1516.42L2441.64 1534.16L2446.31 1548.16L2449.11 1552.45L2452.84 1553.20L2458.44 1551.89L2469.64 1548.72L2477.11 1547.60L2478.60 1543.49L2479.91 1548.72L2484.58 1548.16L2489.25 1549.65L2491.67 1546.85L2493.54 1548.72L2496.71 1547.60L2501.38 1540.69L2508.85 1522.02L2513.51 1512.69L2517.25 1509.89L2519.12 1509.51L2520.98 1532.29L2522.29 1549.65L2524.72 1548.16L2528.45 1543.12L2530.88 1541.62L2530.88 1572.00L1745.34 1572.00Z" fill="url(#g5)"/><path d="M1745.34 1549.65L1750.94 1550.02L1764.01 1548.16L1778.94 1546.66L1781.75 1545.36L1787.35 1539.38L1790.15 1538.26L1793.88 1538.26L1801.35 1539.76L1809.75 1541.62L1813.48 1541.62L1815.35 1550.96L1816.28 1544.98L1825.62 1544.05L1834.95 1542.00L1843.35 1541.25L1845.22 1543.49L1848.02 1550.02L1849.89 1552.82L1854.55 1550.02L1856.05 1536.02L1856.98 1536.02L1859.22 1545.92L1863.89 1546.66L1867.25 1548.16L1874.16 1543.49L1878.82 1541.25L1879.38 1526.31L1880.69 1525.94L1883.49 1536.96L1884.80 1536.02L1887.22 1521.09L1889.09 1520.34L1891.89 1526.69L1895.62 1536.96L1897.49 1537.89L1901.23 1545.36L1903.09 1544.98L1904.03 1542.00L1906.83 1542.00L1913.36 1546.66L1918.03 1548.16L1919.89 1545.92L1922.69 1543.86L1928.30 1536.02L1932.96 1530.42L1937.63 1528.18L1940.43 1524.82L1942.86 1523.33L1944.72 1537.89L1946.03 1537.52L1950.70 1522.02L1953.50 1514.55L1954.81 1513.99L1955.37 1533.60L1960.03 1532.29L1967.50 1528.56L1971.23 1528.18L1990.84 1528.56L1997.37 1523.89L2001.10 1521.09L2003.90 1520.15L2007.64 1494.95L2010.06 1494.02L2013.24 1511.75L2016.04 1535.09L2017.91 1536.96L2021.64 1528.56L2024.44 1526.13L2027.24 1526.69L2031.91 1531.36L2038.44 1538.82L2043.11 1540.69L2045.91 1536.96L2049.64 1528.18L2051.51 1527.06L2052.44 1537.89L2054.31 1537.52L2058.98 1530.42L2062.71 1526.13L2064.20 1525.75L2066.44 1529.49L2071.67 1535.65L2072.61 1519.22L2076.71 1519.22L2083.25 1522.02L2092.58 1525.75L2099.12 1526.69L2100.00 1528.56L2102.80 1532.85L2104.67 1529.49L2105.60 1502.05L2107.84 1502.05L2112.13 1507.09L2117.74 1516.42L2121.47 1519.78L2125.20 1520.71L2129.87 1525.75L2132.67 1527.62L2142.94 1529.12L2152.27 1530.42L2156.01 1525.19L2158.81 1524.82L2164.41 1534.16L2167.58 1536.02L2170.94 1530.42L2175.61 1522.02L2179.34 1519.78L2183.08 1512.69L2185.88 1508.95L2187.74 1489.35L2190.54 1433.34L2193.34 1394.14L2195.58 1384.81L2197.08 1383.31L2198.01 1433.34L2198.57 1508.95L2200.81 1509.51L2207.35 1518.29L2211.08 1519.78L2215.75 1529.49L2217.99 1531.36L2220.41 1517.35L2224.15 1487.48L2226.57 1477.22L2227.88 1475.91L2228.44 1515.11L2230.31 1514.55L2231.62 1510.26L2236.28 1508.95L2241.88 1510.26L2251.22 1515.49L2258.69 1519.22L2265.22 1520.15L2270.82 1519.22L2272.69 1516.42L2273.99 1502.79L2275.49 1502.42L2278.29 1511.75L2280.15 1511.75L2284.82 1502.42L2288.56 1494.02L2290.80 1492.15L2292.29 1520.71L2293.22 1520.15L2294.72 1422.14L2296.02 1420.65L2296.40 1526.69L2297.89 1525.75L2300.69 1506.15L2303.49 1489.35L2307.22 1487.48L2310.58 1485.06L2313.20 1485.24L2316.56 1494.95L2321.23 1508.95L2323.65 1512.69L2326.83 1509.89L2333.36 1497.75L2338.03 1489.35L2340.83 1488.42L2341.76 1521.65L2344.56 1521.46L2352.03 1515.49L2358.56 1510.82L2361.36 1509.51L2364.16 1502.42L2366.96 1496.82L2374.43 1494.39L2380.03 1492.52L2382.27 1492.71L2384.70 1512.69L2387.50 1514.55L2393.10 1518.29L2395.90 1520.15L2398.70 1502.42L2400.94 1493.64L2403.37 1494.95L2405.24 1495.88L2408.04 1495.51L2410.84 1499.62L2415.50 1511.75L2418.30 1516.42L2420.73 1516.05L2423.90 1502.42L2426.33 1495.32L2427.64 1494.95L2428.57 1504.29L2432.31 1508.02L2436.04 1516.42L2441.64 1534.16L2446.31 1548.16L2449.11 1552.45L2452.84 1553.20L2458.44 1551.89L2469.64 1548.72L2477.11 1547.60L2478.60 1543.49L2479.91 1548.72L2484.58 1548.16L2489.25 1549.65L2491.67 1546.85L2493.54 1548.72L2496.71 1547.60L2501.38 1540.69L2508.85 1522.02L2513.51 1512.69L2517.25 1509.89L2519.12 1509.51L2520.98 1532.29L2522.29 1549.65L2524.72 1548.16L2528.45 1543.12L2530.88 1541.62" fill="none" stroke="#00C897" stroke-width="2.8" stroke-linecap="round" stroke-linejoin="round"/></g></svg>
</div></body></html>
